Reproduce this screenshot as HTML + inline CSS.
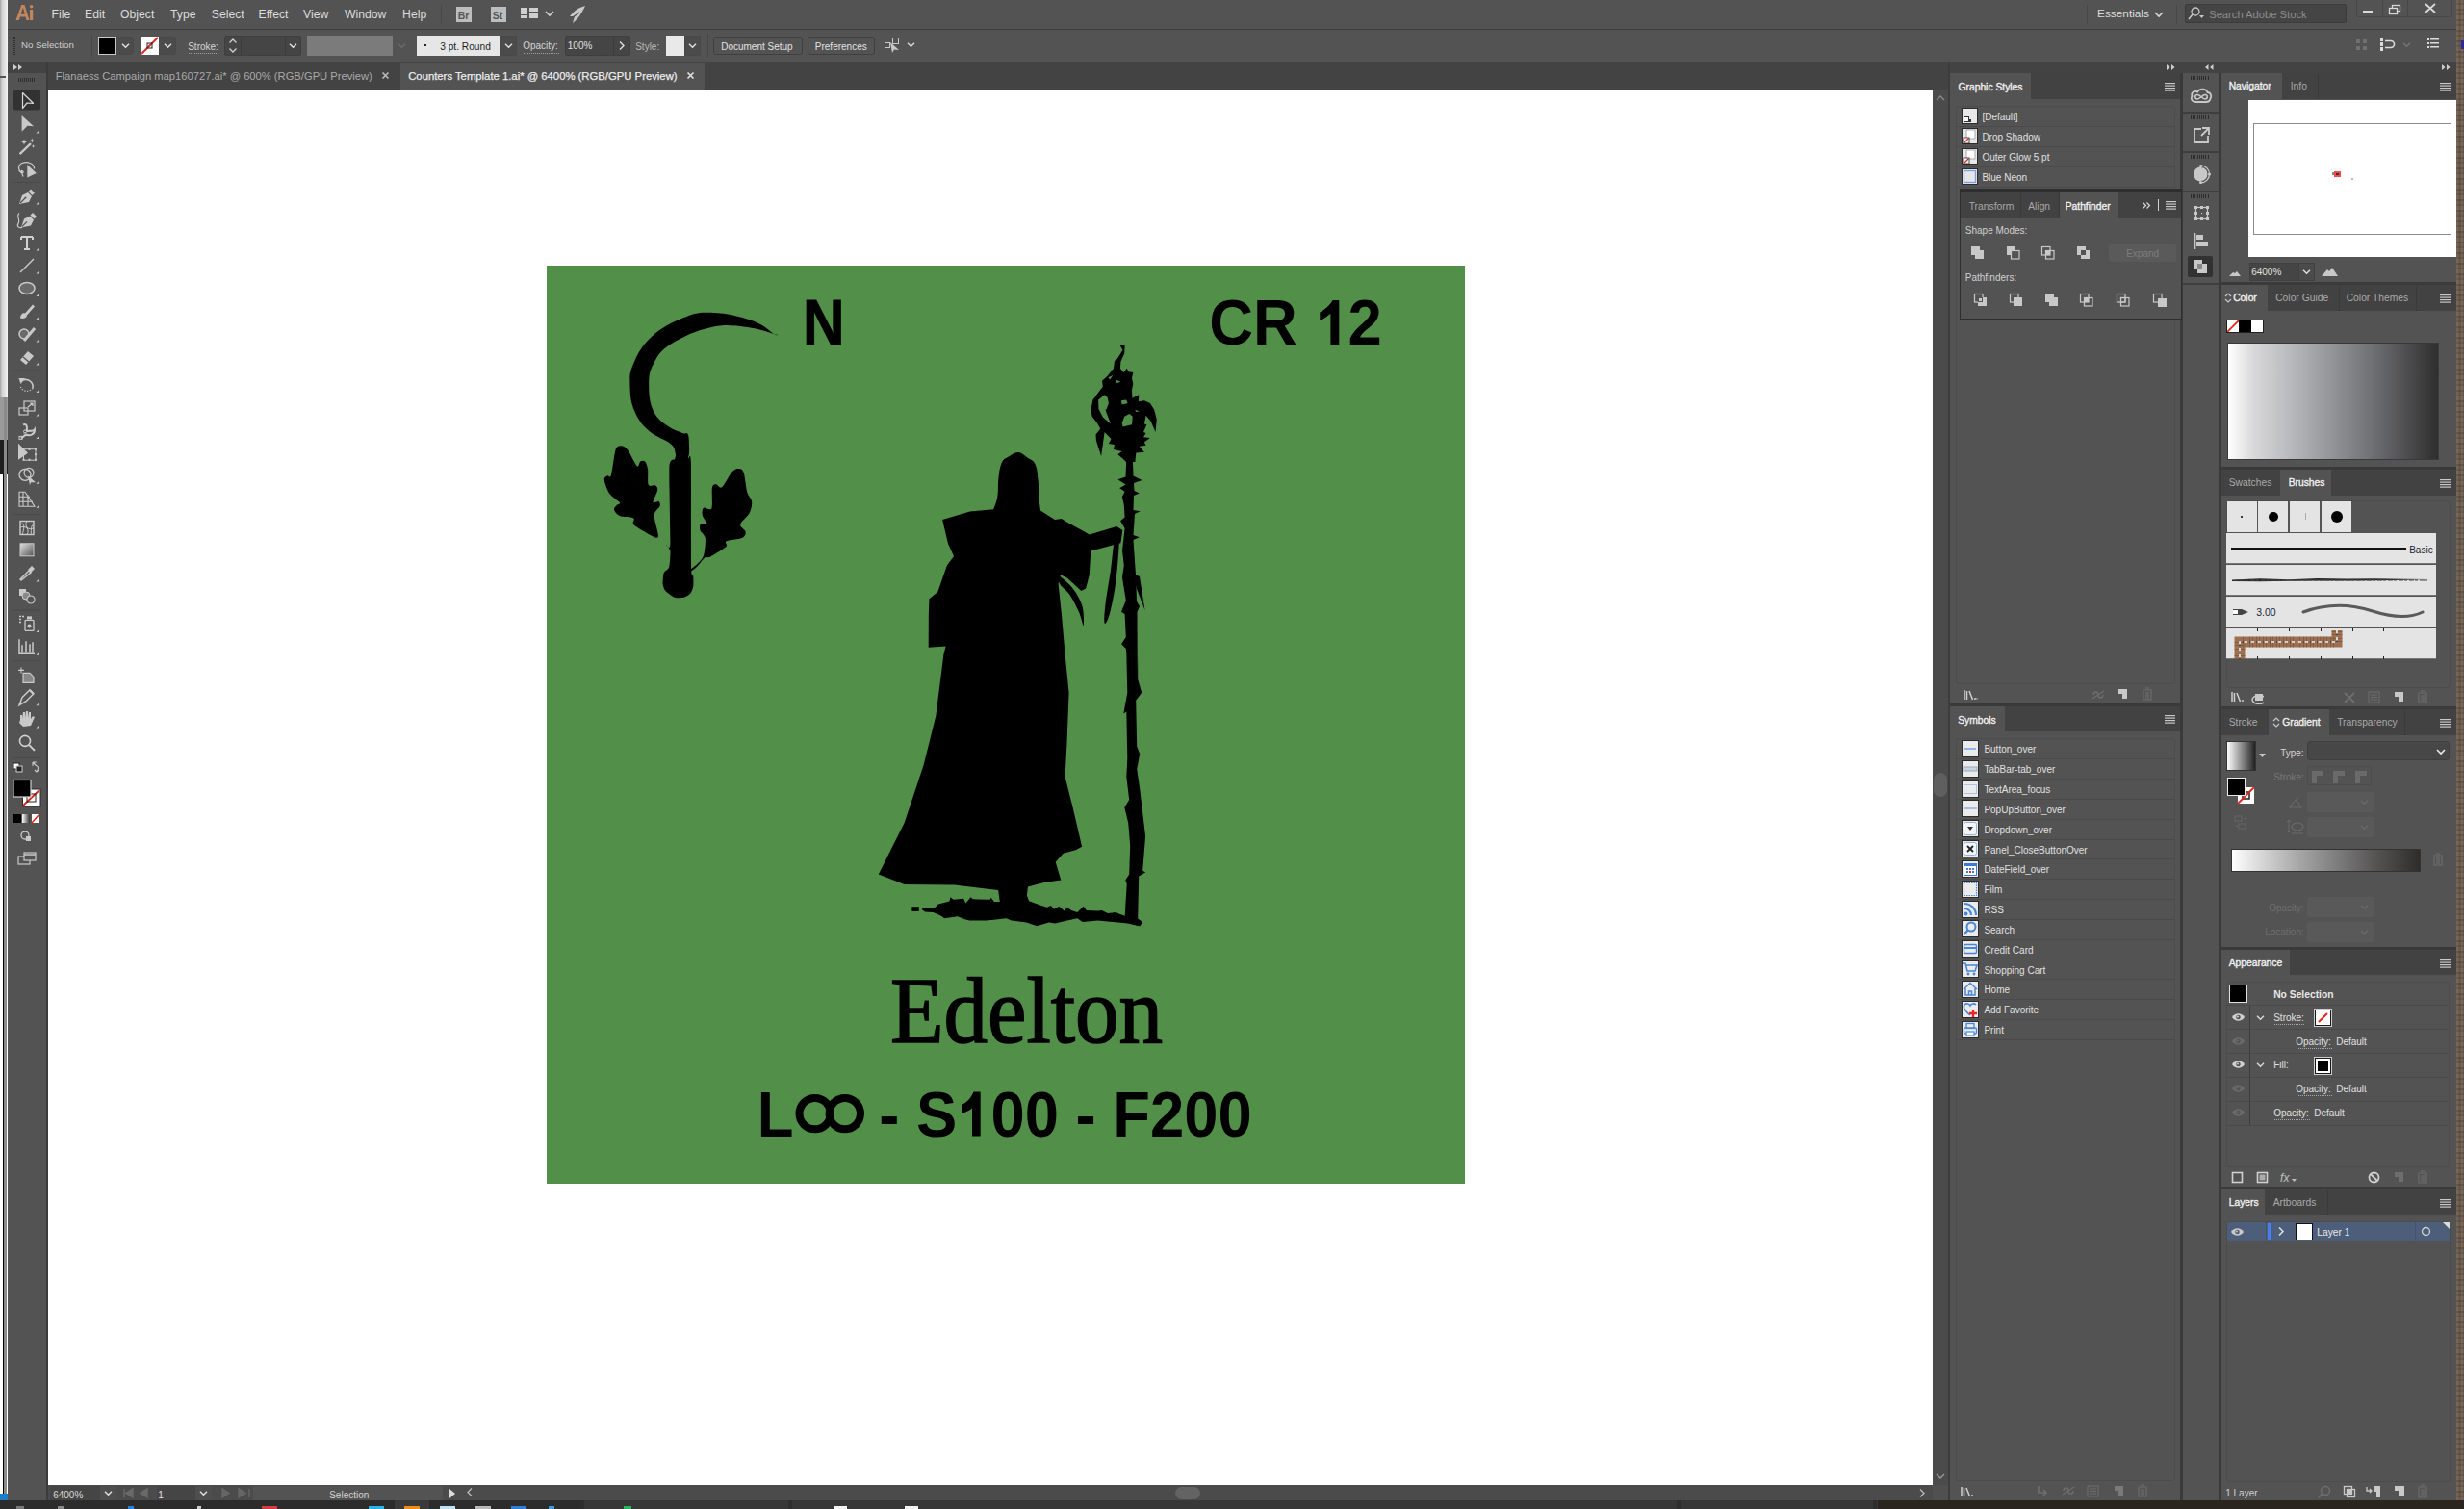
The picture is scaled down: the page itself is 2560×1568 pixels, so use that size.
<!DOCTYPE html>
<html><head><meta charset="utf-8">
<style>
html,body{margin:0;padding:0}
body{width:2560px;height:1568px;overflow:hidden;position:relative;background:#535353;font-family:"Liberation Sans",sans-serif;color:#d4d4d4;font-size:11px}
.a{position:absolute}
.dk{background:#434343}
.pn{background:#535353}
.t{position:absolute;white-space:nowrap;line-height:1}
.ham{position:absolute;width:12px;height:9px;background:repeating-linear-gradient(#cfcfcf 0 1px,transparent 1px 2px)}
.grip{position:absolute;width:22px;height:4px;background:repeating-linear-gradient(90deg,#2e2e2e 0 1px,transparent 1px 2px)}
.row{position:absolute;left:0;right:0;border-bottom:1px solid #4a4a4a}
.dd{position:absolute;width:10px;height:10px}
.ico{position:absolute;width:18px;height:18px;background:#e8e8e8;border:1px solid #2b2b2b;box-sizing:border-box}
</style></head>
<body>
<!-- desktop strips -->
<div class="a" style="left:0;top:0;width:8px;height:413px;background:linear-gradient(90deg,#a0a0a0 0,#d0d0d0 2px,#e2e2e2 5px,#f4f4f4 8px)"></div><div class="a" style="left:0;top:79px;width:6px;height:2px;background:#555"></div>
<div class="a" style="left:0;top:413px;width:8px;height:44px;background:#9a9a9a"></div>
<div class="a" style="left:0;top:457px;width:8px;height:36px;background:#1e1e1e"></div>
<div class="a" style="left:0;top:493px;width:8px;height:1059px;background:#ffffff"></div>
<div class="a" style="left:3px;top:493px;width:1px;height:1059px;background:#000"></div>
<div class="a" style="left:4px;top:413px;width:3px;height:1139px;background:#8a8a8a"></div><div class="a" style="left:8px;top:0;width:1px;height:1559px;background:#3a3a3a"></div>
<div class="a" style="left:0;top:1552px;width:8px;height:8px;background:#1a7dc8"></div>
<div class="a" style="left:2552px;top:0;width:8px;height:1559px;background:repeating-linear-gradient(#6d5d4f 0 3px,#62544a 3px 5px,#73604f 5px 9px,#5e5045 9px 11px)"></div><div class="a" style="left:2552px;top:0;width:8px;height:1559px;background:repeating-linear-gradient(90deg,rgba(255,255,255,0.04) 0 2px,rgba(0,0,0,0.06) 2px 5px)"></div><div class="a" style="left:2557px;top:42px;width:3px;height:9px;background:#2a2a9a"></div>

<!-- menu bar -->
<div class="a pn" style="left:8px;top:0;width:2544px;height:30px"></div>
<div class="a" style="left:8px;top:30px;width:2544px;height:1px;background:#3d3d3d"></div>
<!-- control bar -->
<div class="a pn" style="left:8px;top:31px;width:2544px;height:33px"></div>

<!-- toolbar -->
<div class="a" style="left:8px;top:64px;width:40px;height:12px;background:#434343"></div>
<div class="a pn" style="left:8px;top:76px;width:40px;height:1483px"></div>
<div class="a" style="left:48px;top:64px;width:2px;height:1495px;background:#3c3c3c"></div>

<!-- doc tabs -->
<div class="a dk" style="left:50px;top:64px;width:1974px;height:29px"></div>
<div class="a pn" style="left:416px;top:65px;width:316px;height:28px"></div>

<!-- canvas -->
<div class="a" style="left:50px;top:93px;width:1958px;height:1450px;background:#fff"></div><div class="a" style="left:50px;top:92.5px;width:1958px;height:1px;background:#9a9a9a"></div>
<div class="a" style="left:2008px;top:93px;width:16px;height:1450px;background:#4b4b4b"></div>
<div class="a" style="left:2024px;top:64px;width:2px;height:1495px;background:#3d3d3d"></div>

<!-- status bar -->
<div class="a" style="left:50px;top:1543px;width:1974px;height:16px;background:#4b4b4b"></div>
<!-- taskbar -->


<!-- dock col1 -->
<div class="a dk" style="left:2026px;top:64px;width:239px;height:12px"></div>
<div class="a pn" style="left:2026px;top:76px;width:239px;height:1483px"></div>
<div class="a" style="left:2026px;top:64px;width:526px;height:12px;background:#434343"></div><div class="a" style="left:2265px;top:76px;width:3px;height:1483px;background:#3a3a3a"></div>
<!-- icon strip -->
<div class="a dk" style="left:2268px;top:64px;width:37px;height:12px"></div>
<div class="a pn" style="left:2268px;top:76px;width:37px;height:1483px"></div>
<div class="a" style="left:2305px;top:76px;width:3px;height:1483px;background:#3a3a3a"></div>
<!-- dock col2 -->
<div class="a dk" style="left:2308px;top:64px;width:244px;height:12px"></div>
<div class="a pn" style="left:2308px;top:76px;width:244px;height:1483px"></div>

<svg class="a" style="left:14px;top:3px" width="24" height="20"><path d="M2.5,18 L8.3,2 L11.5,2 L16.5,18 L13.5,18 L12.5,14.5 L6.9,14.5 L5.8,18Z M7.7,11.8 L11.8,11.8 L9.8,4.8Z" fill="#c0875c" fill-rule="evenodd"/><rect x="17" y="7" width="3.2" height="11" fill="#c0875c"/><circle cx="18.6" cy="3.8" r="1.8" fill="#c0875c"/></svg>
<div class="t" style="left:53.6px;top:8.9px;font-size:12.2px;color:#dcdcdc;font-weight:normal;">File</div>
<div class="t" style="left:88.1px;top:8.9px;font-size:12.2px;color:#dcdcdc;font-weight:normal;">Edit</div>
<div class="t" style="left:125.1px;top:8.9px;font-size:12.2px;color:#dcdcdc;font-weight:normal;">Object</div>
<div class="t" style="left:177.1px;top:8.9px;font-size:12.2px;color:#dcdcdc;font-weight:normal;">Type</div>
<div class="t" style="left:219.8px;top:8.9px;font-size:12.2px;color:#dcdcdc;font-weight:normal;">Select</div>
<div class="t" style="left:268.5px;top:8.9px;font-size:12.2px;color:#dcdcdc;font-weight:normal;">Effect</div>
<div class="t" style="left:315.1px;top:8.9px;font-size:12.2px;color:#dcdcdc;font-weight:normal;">View</div>
<div class="t" style="left:358.0px;top:8.9px;font-size:12.2px;color:#dcdcdc;font-weight:normal;">Window</div>
<div class="t" style="left:418.1px;top:8.9px;font-size:12.2px;color:#dcdcdc;font-weight:normal;">Help</div>
<div class="a" style="left:458px;top:5px;width:1px;height:19px;background:#474747;"></div>
<div class="a" style="left:474px;top:7px;width:16px;height:16px;background:#bdbdbd;"></div>
<div class="t" style="left:475.7px;top:10.6px;font-size:10.5px;color:#555;font-weight:bold;">Br</div>
<div class="a" style="left:510px;top:7px;width:16px;height:16px;background:#bdbdbd;"></div>
<div class="t" style="left:511.7px;top:10.6px;font-size:10.5px;color:#555;font-weight:bold;">St</div>
<div class="a" style="left:541px;top:8px;width:7px;height:7px;background:#cfcfcf;"></div><div class="a" style="left:550px;top:8px;width:9px;height:4px;background:#cfcfcf;"></div><div class="a" style="left:550px;top:14px;width:9px;height:5px;background:#cfcfcf;"></div><div class="a" style="left:541px;top:16px;width:7px;height:3px;background:#cfcfcf;"></div>
<svg class="a" style="left:566px;top:10px" width="10" height="8"><path d="M1,2.0 L5,6.0 L9,2.0" fill="none" stroke="#cfcfcf" stroke-width="1.6"/></svg>
<svg class="a" style="left:590px;top:5px" width="20" height="20"><path d="M18,1 C10,3 5,8 2,12 L7,12 L5,19 C10,15 14,10 18,1Z" fill="#c8c8c8"/><path d="M5,13 L12,8" stroke="#535353" stroke-width="1.5"/></svg>
<div class="a" style="left:2168px;top:5px;width:1px;height:20px;background:#474747;"></div>
<div class="t" style="left:2179.1px;top:9.0px;font-size:11.8px;color:#dcdcdc;font-weight:normal;">Essentials</div>
<svg class="a" style="left:2238px;top:11px" width="10" height="8"><path d="M1,2.0 L5,6.0 L9,2.0" fill="none" stroke="#d8d8d8" stroke-width="1.6"/></svg>
<div class="a" style="left:2261px;top:5px;width:1px;height:20px;background:#474747;"></div>
<div class="a" style="left:2270px;top:4px;width:168px;height:20px;background:#454545;border:1px solid #3c3c3c;box-sizing:border-box;border-radius:2px"></div>
<svg class="a" style="left:2273px;top:7px" width="18" height="14"><circle cx="8" cy="5" r="4" fill="none" stroke="#c8c8c8" stroke-width="1.3"/><path d="M5,8 L1,13" stroke="#c8c8c8" stroke-width="1.5"/><path d="M12,9 L17,9 L14.5,12Z" fill="#c8c8c8"/></svg>
<div class="t" style="left:2295.2px;top:9.5px;font-size:11.2px;color:#8d8d8d;font-weight:normal;">Search Adobe Stock</div>
<div class="a" style="left:2448px;top:0px;width:100px;height:18px;background:transparent;border:1px solid #474747;border-top:none;box-sizing:border-box;border-radius:0 0 3px 3px"></div>
<div class="a" style="left:2475px;top:0px;width:1px;height:18px;background:#474747;"></div><div class="a" style="left:2501px;top:0px;width:1px;height:18px;background:#474747;"></div>
<div class="a" style="left:2455px;top:11px;width:10px;height:2px;background:#d8d8d8;"></div>
<svg class="a" style="left:2481px;top:4px" width="14" height="12"><rect x="4.5" y="1.5" width="8" height="6" fill="none" stroke="#d8d8d8" stroke-width="1.3"/><rect x="1.5" y="4.5" width="8" height="6" fill="#535353" stroke="#d8d8d8" stroke-width="1.3"/></svg>
<svg class="a" style="left:2518px;top:3px" width="14" height="12"><path d="M2,1 L12,10 M12,1 L2,10" stroke="#d8d8d8" stroke-width="1.8"/></svg>
<div class="a" style="left:13px;top:38px;width:3px;height:19px;background:repeating-linear-gradient(#2f2f2f 0 1px,transparent 1px 2px)"></div>
<div class="t" style="left:21.9px;top:42.4px;font-size:9.7px;color:#cfcfcf;font-weight:normal;">No Selection</div>
<div class="a" style="left:95px;top:36px;width:1px;height:23px;background:#474747;"></div>
<div class="a" style="left:102px;top:38px;width:19px;height:19px;background:#000;border:1px solid #c8c8c8;box-sizing:border-box"></div>
<div class="a" style="left:121px;top:38px;width:18px;height:19px;background:#4b4b4b;border:1px solid #484848;box-sizing:border-box;border-radius:0 3px 3px 0"></div>
<svg class="a" style="left:125.5px;top:43.5px" width="9.0" height="7.0"><path d="M1,1.75 L4.5,5.25 L8.0,1.75" fill="none" stroke="#e0e0e0" stroke-width="1.5"/></svg>
<div class="a" style="left:146px;top:38px;width:19px;height:19px;background:#fff;"></div>
<svg class="a" style="left:146px;top:38px" width="19" height="19"><path d="M1,18 L18,1" stroke="#e2231a" stroke-width="1.8"/><rect x="7" y="7" width="5" height="5" fill="none" stroke="#222" stroke-width="1"/></svg>
<div class="a" style="left:165px;top:38px;width:18px;height:19px;background:#4b4b4b;border:1px solid #484848;box-sizing:border-box;border-radius:0 3px 3px 0"></div>
<svg class="a" style="left:169.5px;top:43.5px" width="9.0" height="7.0"><path d="M1,1.75 L4.5,5.25 L8.0,1.75" fill="none" stroke="#e0e0e0" stroke-width="1.5"/></svg>
<div class="t" style="left:195.2px;top:43.5px;font-size:10px;color:#d6d6d6;font-weight:normal;">Stroke:</div>
<div class="a" style="left:196px;top:55px;width:31px;height:1px;background:repeating-linear-gradient(90deg,#a0a0a0 0 1px,transparent 1px 2px)"></div>
<div class="a" style="left:233px;top:37px;width:80px;height:21px;background:#454545;border:1px solid #3f3f3f;box-sizing:border-box;border-radius:2px"></div>
<div class="a" style="left:250px;top:38px;width:1px;height:19px;background:#3c3c3c;"></div><div class="a" style="left:296px;top:38px;width:1px;height:19px;background:#3c3c3c;"></div>
<svg class="a" style="left:237px;top:39px" width="10" height="17"><path d="M1.5,5.5 L5,2 L8.5,5.5 M1.5,11.5 L5,15 L8.5,11.5" fill="none" stroke="#d0d0d0" stroke-width="1.3"/></svg>
<svg class="a" style="left:300.0px;top:43.5px" width="9.0" height="7.0"><path d="M1,1.75 L4.5,5.25 L8.0,1.75" fill="none" stroke="#e0e0e0" stroke-width="1.5"/></svg>
<div class="a" style="left:319px;top:37px;width:89px;height:21px;background:#7b7b7b;"></div>
<svg class="a" style="left:412.5px;top:43.5px" width="9.0" height="7.0"><path d="M1,1.75 L4.5,5.25 L8.0,1.75" fill="none" stroke="#6a6a6a" stroke-width="1.5"/></svg>
<div class="a" style="left:433px;top:37px;width:86px;height:21px;background:#e6e6e6;"></div>
<div class="a" style="left:441px;top:46px;width:2px;height:2px;background:#222;"></div>
<div class="t" style="left:457.2px;top:43.9px;font-size:10.2px;color:#1e1e1e;font-weight:normal;">3 pt. Round</div>
<div class="a" style="left:519px;top:37px;width:18px;height:21px;background:#4b4b4b;border:1px solid #484848;box-sizing:border-box"></div>
<svg class="a" style="left:523.5px;top:43.5px" width="9.0" height="7.0"><path d="M1,1.75 L4.5,5.25 L8.0,1.75" fill="none" stroke="#e0e0e0" stroke-width="1.5"/></svg>
<div class="t" style="left:543.2px;top:43.0px;font-size:10px;color:#d6d6d6;font-weight:normal;">Opacity:</div>
<div class="a" style="left:544px;top:54.5px;width:37px;height:1px;background:repeating-linear-gradient(90deg,#a0a0a0 0 1px,transparent 1px 2px)"></div>
<div class="a" style="left:587px;top:37px;width:68px;height:21px;background:#454545;border:1px solid #3f3f3f;box-sizing:border-box;border-radius:2px"></div>
<div class="a" style="left:637px;top:38px;width:1px;height:19px;background:#3c3c3c;"></div>
<div class="t" style="left:589.8px;top:43.0px;font-size:10px;color:#e0e0e0;font-weight:normal;">100%</div>
<svg class="a" style="left:642px;top:42px" width="8" height="11"><path d="M2,1.5 L6,5.5 L2,9.5" fill="none" stroke="#e0e0e0" stroke-width="1.4"/></svg>
<div class="t" style="left:660.2px;top:43.5px;font-size:10px;color:#b8b8b8;font-weight:normal;">Style:</div>
<div class="a" style="left:691.5px;top:37px;width:19px;height:21px;background:#e9e9e9;"></div>
<div class="a" style="left:711px;top:37px;width:17px;height:21px;background:#4b4b4b;border:1px solid #484848;box-sizing:border-box"></div>
<svg class="a" style="left:715.0px;top:43.5px" width="9.0" height="7.0"><path d="M1,1.75 L4.5,5.25 L8.0,1.75" fill="none" stroke="#e0e0e0" stroke-width="1.5"/></svg>
<div class="a" style="left:735px;top:35px;width:1px;height:24px;background:#474747;"></div>
<div class="a" style="left:741px;top:38px;width:93px;height:19px;background:transparent;border:1px solid #404040;box-sizing:border-box;border-radius:3px"></div>
<div class="t" style="left:749.2px;top:44.0px;font-size:10px;color:#e2e2e2;font-weight:normal;">Document Setup</div>
<div class="a" style="left:839px;top:38px;width:70px;height:19px;background:transparent;border:1px solid #404040;box-sizing:border-box;border-radius:3px"></div>
<div class="t" style="left:846.8px;top:44.0px;font-size:10px;color:#e2e2e2;font-weight:normal;">Preferences</div>
<svg class="a" style="left:918px;top:38px" width="20" height="18"><rect x="1.5" y="6.5" width="5" height="5" fill="none" stroke="#c8c8c8"/><rect x="9.5" y="1.5" width="6" height="6" fill="none" stroke="#c8c8c8"/><path d="M7,6 L16,14 L11,13.5 L9,17Z" fill="#c8c8c8"/></svg>
<svg class="a" style="left:941.5px;top:42.5px" width="9.0" height="7.0"><path d="M1,1.75 L4.5,5.25 L8.0,1.75" fill="none" stroke="#d8d8d8" stroke-width="1.4"/></svg>
<svg class="a" style="left:2447px;top:40px" width="14" height="14"><g fill="#707070"><rect x="1" y="1" width="4" height="4"/><rect x="8" y="1" width="4" height="4"/><rect x="1" y="8" width="4" height="4"/><rect x="8" y="8" width="4" height="4"/></g></svg>
<svg class="a" style="left:2473px;top:39px" width="18" height="16"><g fill="#dcdcdc"><rect x="0" y="0" width="3" height="4"/><rect x="0" y="5" width="3" height="4"/><rect x="0" y="10" width="3" height="4"/></g><path d="M5,3.5 L11,3.5 A3.5,3.5 0 0 1 11,10.5 L5,10.5" fill="none" stroke="#dcdcdc" stroke-width="1.6"/></svg>
<svg class="a" style="left:2495.5px;top:42.5px" width="9.0" height="7.0"><path d="M1,1.75 L4.5,5.25 L8.0,1.75" fill="none" stroke="#777" stroke-width="1.4"/></svg>
<svg class="a" style="left:2522px;top:40px" width="12" height="12"><g fill="#dcdcdc"><rect x="0" y="0" width="2" height="2"/><rect x="0" y="4" width="2" height="2"/><rect x="0" y="8" width="2" height="2"/><rect x="3" y="0" width="9" height="1.5"/><rect x="3" y="4" width="9" height="1.5"/><rect x="3" y="8" width="9" height="1.5"/></g></svg>
<div class="t" style="left:57.7px;top:74.0px;font-size:11.2px;color:#a9a9a9;font-weight:normal;">Flanaess Campaign map160727.ai* @ 600% (RGB/GPU Preview)</div>
<svg class="a" style="left:396px;top:74px" width="10" height="10"><path d="M1.5,1.5 L7.5,7.5 M7.5,1.5 L1.5,7.5" stroke="#b8b8b8" stroke-width="1.7"/></svg>
<div class="t" style="left:424.2px;top:73.9px;font-size:11.3px;color:#ececec;font-weight:normal;-webkit-text-stroke:0.25px #ececec">Counters Template 1.ai* @ 6400% (RGB/GPU Preview)</div>
<svg class="a" style="left:713px;top:74px" width="10" height="10"><path d="M1.5,1.5 L7.5,7.5 M7.5,1.5 L1.5,7.5" stroke="#e0e0e0" stroke-width="1.7"/></svg>
<svg class="a" style="left:2010px;top:98px" width="12" height="8"><path d="M2,6 L6,2 L10,6" fill="none" stroke="#8a8a8a" stroke-width="1.4"/></svg>
<svg class="a" style="left:2010px;top:1530px" width="12" height="8"><path d="M2,2 L6,6 L10,2" fill="none" stroke="#9a9a9a" stroke-width="1.4"/></svg>
<div class="a" style="left:52px;top:1544px;width:52px;height:15px;background:#454545;"></div>
<div class="t" style="left:55.2px;top:1549.0px;font-size:10px;color:#d8d8d8;font-weight:normal;">6400%</div>
<div class="a" style="left:104px;top:1544px;width:17px;height:15px;background:#4e4e4e;"></div>
<svg class="a" style="left:107.5px;top:1547.5px" width="9.0" height="7.0"><path d="M1,1.75 L4.5,5.25 L8.0,1.75" fill="none" stroke="#e0e0e0" stroke-width="1.5"/></svg>
<svg class="a" style="left:128px;top:1546px" width="36" height="12"><path d="M1,1 L1,10 M10,1 L3,5.5 L10,10Z M25,1 L18,5.5 L25,10Z" fill="#6a6a6a" stroke="#6a6a6a" stroke-width="1.5"/></svg>
<div class="a" style="left:163px;top:1544px;width:40px;height:15px;background:#454545;"></div>
<div class="t" style="left:164.2px;top:1549.0px;font-size:10px;color:#e0e0e0;font-weight:normal;">1</div>
<div class="a" style="left:203px;top:1544px;width:17px;height:15px;background:#4e4e4e;"></div>
<svg class="a" style="left:206.5px;top:1547.5px" width="9.0" height="7.0"><path d="M1,1.75 L4.5,5.25 L8.0,1.75" fill="none" stroke="#e0e0e0" stroke-width="1.5"/></svg>
<svg class="a" style="left:228px;top:1546px" width="36" height="12"><path d="M3,1 L10,5.5 L3,10Z M20,1 L27,5.5 L20,10Z M31,1 L31,10" fill="#666" stroke="#666" stroke-width="1.5"/></svg>
<div class="a" style="left:263px;top:1544px;width:197px;height:15px;background:#535353;"></div>
<div class="t" style="left:342.2px;top:1549.0px;font-size:10px;color:#d2d2d2;font-weight:normal;">Selection</div>
<svg class="a" style="left:465px;top:1546px" width="10" height="12"><path d="M2,1 L8,6 L2,11Z" fill="#dcdcdc"/></svg>
<svg class="a" style="left:484px;top:1545px" width="8" height="12"><path d="M6,1.5 L2,5.5 L6,9.5" fill="none" stroke="#bbb" stroke-width="1.3"/></svg>
<div class="a" style="left:1221px;top:1545px;width:26px;height:13px;background:#636363;border-radius:7px"></div>
<div class="a" style="left:2009px;top:803px;width:14px;height:25px;background:#5f5f5f;border-radius:7px"></div>
<svg class="a" style="left:1993px;top:1546px" width="8" height="12"><path d="M2,1.5 L6,5.5 L2,9.5" fill="none" stroke="#bbb" stroke-width="1.3"/></svg>
<div class="a" style="left:0px;top:1559px;width:603px;height:9px;background:#2c2c2c;"></div>
<div class="a" style="left:603px;top:1559px;width:1348px;height:9px;background:#373737;"></div>
<div class="a" style="left:1951px;top:1559px;width:609px;height:9px;background:#2b2520;"></div>
<div class="a" style="left:603px;top:1559px;width:4px;height:9px;background:#2e2e2e;"></div>
<div class="a" style="left:819px;top:1559px;width:4px;height:9px;background:#2e2e2e;"></div>
<div class="a" style="left:1742px;top:1559px;width:4px;height:9px;background:#2e2e2e;"></div>
<div class="a" style="left:1946px;top:1559px;width:4px;height:9px;background:#2e2e2e;"></div>
<div class="a" style="left:410px;top:1559px;width:36px;height:9px;background:#3a3a3a;"></div>
<div class="a" style="left:17px;top:1565px;width:8px;height:3px;background:#777;"></div>
<div class="a" style="left:60px;top:1565px;width:6px;height:3px;background:#888;"></div>
<div class="a" style="left:133px;top:1565px;width:6px;height:3px;background:#2d7fd6;"></div>
<div class="a" style="left:205px;top:1565px;width:4px;height:3px;background:#ccc;"></div>
<div class="a" style="left:272px;top:1565px;width:16px;height:3px;background:#d83b3b;"></div>
<div class="a" style="left:383px;top:1565px;width:16px;height:3px;background:#2ab3e8;"></div>
<div class="a" style="left:420px;top:1565px;width:16px;height:3px;background:#f08a1c;"></div>
<div class="a" style="left:457px;top:1565px;width:16px;height:3px;background:#bfe3f5;"></div>
<div class="a" style="left:494px;top:1565px;width:16px;height:3px;background:#b8b8b8;"></div>
<div class="a" style="left:531px;top:1565px;width:16px;height:3px;background:#2d7fd6;"></div>
<div class="a" style="left:570px;top:1565px;width:6px;height:3px;background:#3a9ae0;"></div>
<div class="a" style="left:648px;top:1565px;width:8px;height:3px;background:#2fb35a;"></div>
<div class="a" style="left:866px;top:1565px;width:14px;height:3px;background:#f2f2f2;"></div>
<div class="a" style="left:940px;top:1565px;width:14px;height:3px;background:#f2f2f2;"></div>
<div class="a" style="left:2008px;top:1543px;width:16px;height:16px;background:#505050;"></div>
<svg class="a" style="left:0;top:0" width="50" height="1560" viewBox="0 0 50 1560">
<path d="M14,67 L18,70 L14,73Z M19,67 L23,70 L19,73Z" fill="#cfcfcf"/>
<g fill="#2f2f2f"><rect x="19" y="81" width="1" height="4"/><rect x="21" y="81" width="1" height="4"/><rect x="23" y="81" width="1" height="4"/><rect x="25" y="81" width="1" height="4"/><rect x="27" y="81" width="1" height="4"/><rect x="29" y="81" width="1" height="4"/><rect x="31" y="81" width="1" height="4"/><rect x="33" y="81" width="1" height="4"/><rect x="35" y="81" width="1" height="4"/></g>
<rect x="14" y="93.5" width="28" height="21" rx="2" fill="#323232"/>
<rect x="13" y="189" width="30" height="1" fill="#4a4a4a"/>
<rect x="13" y="384.5" width="30" height="1" fill="#4a4a4a"/>
<rect x="13" y="534" width="30" height="1" fill="#4a4a4a"/>
<rect x="13" y="633.5" width="30" height="1" fill="#4a4a4a"/>
<rect x="13" y="686" width="30" height="1" fill="#4a4a4a"/>
<rect x="13" y="787" width="30" height="1" fill="#4a4a4a"/>
<rect x="14" y="793" width="6" height="6" fill="#fff" stroke="#222"/><rect x="17" y="796" width="6" height="6" fill="#222" stroke="#ccc"/>
<path d="M34,792 L38,796 M34,792 L34,796 M34,792 L38,792 M38,796 C40,796 40,800 38,802 M38,802 L36,800 M38,802 L40,800" fill="none" stroke="#c9c9c9" stroke-width="1.1"/>
<rect x="23.5" y="820" width="18.5" height="18" fill="#fff" stroke="#2a2a2a"/><path d="M24,837 L41,821" stroke="#e2231a" stroke-width="1.8"/><rect x="28" y="825" width="9" height="8" fill="none" stroke="#222" stroke-width="1"/>
<rect x="14" y="810.5" width="18" height="17.5" fill="#000" stroke="#d0d0d0" stroke-width="1.2"/>
<rect x="14" y="846" width="8" height="9" fill="#000"/><defs><linearGradient id="tg2"><stop offset="0" stop-color="#fff"/><stop offset="1" stop-color="#333"/></linearGradient></defs><rect x="23" y="846" width="8" height="9" fill="url(#tg2)"/><rect x="33" y="846" width="8" height="9" fill="#fff"/><path d="M33,855 L41,846" stroke="#e2231a" stroke-width="1.5"/>
<g transform="translate(28,104)"><path d="M-4.5,-7.5 L6.5,3.3 L0,3 L-4.5,8.6Z" fill="none" stroke="#d8d8d8" stroke-width="1.2" stroke-linejoin="round"/></g>
<g transform="translate(28,130)"><path d="M-5.4,-10 L7,1.2 L0.5,0.8 L-5.4,6.7Z" fill="#c9c9c9"/><path d="M9.5,8.5 L13,5 L13,8.5Z" fill="#c9c9c9"/></g>
<g transform="translate(28,152.6)"><path d="M-7.5,7.5 L4,-3.5" stroke="#c9c9c9" stroke-width="2.2"/><path d="M-3,-8 L-2.2,-5.8 L0,-5 L-2.2,-4.2 L-3,-2 L-3.8,-4.2 L-6,-5 L-3.8,-5.8Z M5.3,-9 L6,-7.2 L7.8,-6.5 L6,-5.8 L5.3,-4 L4.6,-5.8 L2.8,-6.5 L4.6,-7.2Z M6.5,-2.5 L7,-1.2 L8.3,-0.7 L7,-0.2 L6.5,1.1 L6,-0.2 L4.7,-0.7 L6,-1.2Z" fill="#c9c9c9"/></g>
<g transform="translate(28,176.5)"><path d="M7.5,-1 C8,-7 0,-9 -5,-7 C-10,-5 -9,1 -6,3 C-4,4 -3,2 -5,1 C-7,0 -5,4 -4,7" fill="none" stroke="#c9c9c9" stroke-width="1.3"/><path d="M0.3,-5.5 L9.8,3.6 L0.3,8.1Z" fill="#c9c9c9"/></g>
<g transform="translate(28,204)"><path d="M-8,8 L-5,-1 L1,-4 L5,0 L2,6Z" fill="#c9c9c9"/><path d="M1.5,-5 L4,-7.5 L8,-3.5 L5.5,-1Z" fill="#c9c9c9"/><path d="M-7,7 L-2,2" stroke="#535353" stroke-width="1.2"/><circle cx="-1.5" cy="1.5" r="1" fill="#535353"/><path d="M9.5,8.5 L13,5 L13,8.5Z" fill="#c9c9c9"/></g>
<g transform="translate(28,228.4)"><path d="M-6,8 L-3,-1 L3,-4 L7,0 L4,6Z" fill="#c9c9c9"/><path d="M3.5,-5 L6,-7.5 L10,-3.5 L7.5,-1Z" fill="#c9c9c9"/><path d="M-5,7 L0,2" stroke="#535353" stroke-width="1.2"/><path d="M-8,-7 C-12,-3 -6,0 -9,4 C-11,7 -8,9 -5,8" fill="none" stroke="#c9c9c9" stroke-width="1.2"/></g>
<g transform="translate(28,252)"><path d="M-6,-6 L6,-6 M0,-6 L0,7 M-3,7 L3,7 M-6,-6 L-6,-3 M6,-6 L6,-3" stroke="#d0d0d0" stroke-width="2"/><path d="M9.5,8.5 L13,5 L13,8.5Z" fill="#c9c9c9"/></g>
<g transform="translate(28,276)"><path d="M-7,7 L7,-7" stroke="#c9c9c9" stroke-width="1.5"/><path d="M9.5,8.5 L13,5 L13,8.5Z" fill="#c9c9c9"/></g>
<g transform="translate(28,299.4)"><ellipse cx="0" cy="0" rx="8" ry="6" fill="#6a6a6a" stroke="#c9c9c9" stroke-width="1.5"/><path d="M9.5,8.5 L13,5 L13,8.5Z" fill="#c9c9c9"/></g>
<g transform="translate(28,323.6)"><path d="M-7,7 C-7,3 -4,1 -2,2 L6,-7 L8,-5 L0,4 C0,7 -4,8 -7,7Z" fill="#c9c9c9"/><path d="M9.5,8.5 L13,5 L13,8.5Z" fill="#c9c9c9"/></g>
<g transform="translate(28,347)"><circle cx="-3" cy="0" r="5" fill="#6a6a6a" stroke="#c9c9c9" stroke-width="1.5"/><path d="M-3,7 L8,-6" stroke="#c9c9c9" stroke-width="3"/><path d="M9.5,8.5 L13,5 L13,8.5Z" fill="#c9c9c9"/></g>
<g transform="translate(28,371)"><path d="M-7,3 L1,-6 L7,-1 L-1,8Z" fill="#c9c9c9"/><path d="M-4,0 L3,6" stroke="#535353" stroke-width="1.3"/><path d="M9.5,8.5 L13,5 L13,8.5Z" fill="#c9c9c9"/></g>
<g transform="translate(28,399.4)"><path d="M-5,-4 A7.5,7.5 0 0 1 6,4" fill="none" stroke="#c9c9c9" stroke-width="1.6"/><path d="M6,4 A7.5,7.5 0 0 1 -7,2" fill="none" stroke="#c9c9c9" stroke-width="1.2" stroke-dasharray="1.2 1.6"/><path d="M-8.5,-6.5 L-2,-6.5 L-6.5,-0.5Z" fill="#c9c9c9"/><path d="M9.5,8.5 L13,5 L13,8.5Z" fill="#c9c9c9"/></g>
<g transform="translate(28,424)"><rect x="-8" y="0" width="9" height="7" fill="none" stroke="#c9c9c9" stroke-width="1.2"/><rect x="-3" y="-7" width="11" height="10" fill="none" stroke="#c9c9c9" stroke-width="1.2"/><path d="M1,-1 L6,-5 M3,-5 L6,-5 L6,-2" stroke="#c9c9c9" stroke-width="1.2" fill="none"/><path d="M9.5,8.5 L13,5 L13,8.5Z" fill="#c9c9c9"/></g>
<g transform="translate(28,447.4)"><path d="M-4,-6 C0,-8 1,-2 -1,1 C3,-1 6,2 8,-1 C8,4 3,6 -1,4 L-6,8" fill="none" stroke="#c9c9c9" stroke-width="2"/><circle cx="-2" cy="1" r="1.5" fill="#535353" stroke="#c9c9c9"/><rect x="-8" y="6" width="3" height="3" fill="none" stroke="#c9c9c9"/><path d="M9.5,8.5 L13,5 L13,8.5Z" fill="#c9c9c9"/></g>
<g transform="translate(28,470.7)"><rect x="-3.5" y="-4" width="12.5" height="11.5" fill="none" stroke="#c9c9c9" stroke-width="1"/><g fill="#c9c9c9"><rect x="-4.5" y="6" width="2" height="2"/><rect x="1.5" y="6" width="2" height="2"/><rect x="8" y="6" width="2" height="2"/><rect x="8" y="0.5" width="2" height="2"/><rect x="8" y="-5" width="2" height="2"/><rect x="1.5" y="-5" width="2" height="2"/></g><path d="M-9,-10 L1,0 L-9,7Z" fill="#c9c9c9"/></g>
<g transform="translate(28,494.3)"><circle cx="-2" cy="-1" r="6" fill="none" stroke="#c9c9c9" stroke-width="1.3"/><circle cx="2" cy="-3" r="5" fill="none" stroke="#c9c9c9" stroke-width="1.2"/><path d="M1,0 L9,7 L4,7 L3,10Z" fill="#c9c9c9"/><path d="M9.5,8.5 L13,5 L13,8.5Z" fill="#c9c9c9"/></g>
<g transform="translate(28,519.3)"><path d="M-8,-8 L-8,7 L8,7 L-2,-8Z M-8,-3 L3,-3 M-8,2 L6,2 M-4,-8 L-4,7 M1,-5 L1,7" fill="none" stroke="#c9c9c9" stroke-width="1.1"/><path d="M9.5,8.5 L13,5 L13,8.5Z" fill="#c9c9c9"/></g>
<g transform="translate(28,548.5)"><rect x="-7" y="-7" width="14" height="14" fill="none" stroke="#c9c9c9" stroke-width="1.4"/><path d="M-7,0 C-2,-4 2,4 7,0 M0,-7 C-4,-2 4,2 0,7 M-7,-4 C-3,-6 -2,-1 -5,7 M7,-4 C3,-1 5,4 4,7" fill="none" stroke="#c9c9c9" stroke-width="1"/></g>
<g transform="translate(28,571.8)"><defs><linearGradient id="tg" x1="0" y1="0" x2="1" y2="1"><stop offset="0" stop-color="#e0e0e0"/><stop offset="1" stop-color="#555"/></linearGradient></defs><rect x="-7" y="-7" width="14" height="13" fill="url(#tg)" stroke="#c9c9c9"/></g>
<g transform="translate(28,596)"><path d="M-6,7 L-7,6 L2,-3 L4,-1 Z" fill="none" stroke="#c9c9c9" stroke-width="1.5"/><path d="M1,-4 L5,-8 L8,-5 L4,-1Z" fill="#c9c9c9"/><path d="M9.5,8.5 L13,5 L13,8.5Z" fill="#c9c9c9"/></g>
<g transform="translate(28,619)"><rect x="-8" y="-7" width="7" height="7" fill="#c9c9c9"/><circle cx="-1" cy="0" r="4" fill="#888" stroke="#c9c9c9"/><circle cx="4" cy="4" r="4" fill="#535353" stroke="#c9c9c9" stroke-width="1.2"/></g>
<g transform="translate(28,648.4)"><path d="M-8,-8 h2 M-5,-8 h2 M-8,-5 h2 M-8,-2 h2" stroke="#c9c9c9" stroke-width="1.5"/><rect x="-2" y="-4" width="9" height="11" rx="1" fill="none" stroke="#c9c9c9" stroke-width="1.3"/><circle cx="2.5" cy="2" r="2" fill="#c9c9c9"/><rect x="0" y="-8" width="5" height="3" fill="#c9c9c9"/><path d="M9.5,8.5 L13,5 L13,8.5Z" fill="#c9c9c9"/></g>
<g transform="translate(28,672.3)"><path d="M-8,-8 L-8,7 L8,7 M-5,6 L-5,-2 M-1,6 L-1,-6 M3,6 L3,-3 M6,6 L6,-5" fill="none" stroke="#c9c9c9" stroke-width="1.5"/><path d="M9.5,8.5 L13,5 L13,8.5Z" fill="#c9c9c9"/></g>
<g transform="translate(28,701.4)"><path d="M-6,-8 L-6,-2 M-9,-5 L-3,-5" stroke="#c9c9c9" stroke-width="1.1"/><path d="M-4,-2 L3,-2 L7,2 L7,8 L-4,8Z" fill="#888" stroke="#c9c9c9" stroke-width="1.2"/></g>
<g transform="translate(28,724.7)"><path d="M-8,8 L-5,0 L3,-8 L7,-4 L-1,4Z" fill="none" stroke="#c9c9c9" stroke-width="1.5"/><path d="M2,-7 L6,-3 L7,-5 L4,-8Z" fill="#c9c9c9"/><path d="M9.5,8.5 L13,5 L13,8.5Z" fill="#c9c9c9"/></g>
<g transform="translate(28,748)"><path d="M-7,0 L-7,-5 L-5,-5 L-5,-1 L-4,-8 L-2,-8 L-2,-2 L-1,-9 L1,-9 L1,-2 L2,-8 L4,-8 L4,-1 L6,-4 L8,-3 L4,6 L-4,7 L-8,3Z" fill="#c9c9c9"/><path d="M9.5,8.5 L13,5 L13,8.5Z" fill="#c9c9c9"/></g>
<g transform="translate(28,771.9)"><circle cx="-2" cy="-2" r="5.5" fill="none" stroke="#d0d0d0" stroke-width="1.6"/><path d="M2,2 L8,8" stroke="#d0d0d0" stroke-width="2"/></g>
<g transform="translate(28,869)"><circle cx="-2" cy="-1" r="4" fill="none" stroke="#c9c9c9" stroke-width="1.3"/><rect x="-1" y="0" width="5" height="5" fill="#c9c9c9"/></g>
<g transform="translate(28,893)"><rect x="-9" y="-3" width="12" height="8" fill="none" stroke="#c9c9c9" stroke-width="1.2"/><rect x="-3" y="-7" width="12" height="8" fill="#535353" stroke="#c9c9c9" stroke-width="1.2"/><path d="M-3,-5 h12" stroke="#c9c9c9" stroke-width="1.5"/></g>
</svg>
<svg class="a" style="left:2250px;top:66px" width="12" height="8"><path d="M1,1 L4.5,4 L1,7Z M6,1 L9.5,4 L6,7Z" fill="#cfcfcf"/></svg>
<svg class="a" style="left:2290px;top:66px" width="12" height="8"><path d="M4.5,1 L1,4 L4.5,7Z M9.5,1 L6,4 L9.5,7Z" fill="#cfcfcf"/></svg>
<svg class="a" style="left:2536px;top:66px" width="12" height="8"><path d="M1,1 L4.5,4 L1,7Z M6,1 L9.5,4 L6,7Z" fill="#cfcfcf"/></svg>
<div class="a" style="left:2110px;top:76px;width:155px;height:27px;background:#424242;"></div>
<div class="a" style="left:2026px;top:103px;width:239px;height:1px;background:#535353;"></div>
<div class="t" style="left:2034.5px;top:85.8px;font-size:10.3px;color:#f0f0f0;font-weight:normal;-webkit-text-stroke:0.35px #f0f0f0">Graphic Styles</div>
<svg class="a" style="left:2249px;top:86px" width="11" height="9"><g fill="#c8c8c8"><rect x="0" y="0" width="11" height="1.2"/><rect x="0" y="2.5" width="11" height="1.2"/><rect x="0" y="5" width="11" height="1.2"/><rect x="0" y="7.5" width="11" height="1.2"/></g></svg>
<div class="a" style="left:2032px;top:110px;width:228px;height:601px;background:transparent;border:1px solid #4c4c4c;box-sizing:border-box;border-radius:3px"></div>
<div class="a" style="left:2033px;top:131px;width:226px;height:1px;background:#4a4a4a;"></div>
<div class="a" style="left:2037.5px;top:112px;width:17px;height:17px;background:#e8e8e8;border:1px solid #2b2b2b;box-sizing:border-box"></div>
<div class="t" style="left:2059.4px;top:116.5px;font-size:10px;color:#e0e0e0;font-weight:normal;">[Default]</div>
<div class="a" style="left:2033px;top:152px;width:226px;height:1px;background:#4a4a4a;"></div>
<div class="a" style="left:2037.5px;top:133px;width:17px;height:17px;background:#e8e8e8;border:1px solid #2b2b2b;box-sizing:border-box"></div>
<div class="t" style="left:2059.4px;top:137.5px;font-size:10px;color:#e0e0e0;font-weight:normal;">Drop Shadow</div>
<div class="a" style="left:2033px;top:173px;width:226px;height:1px;background:#4a4a4a;"></div>
<div class="a" style="left:2037.5px;top:154px;width:17px;height:17px;background:#e8e8e8;border:1px solid #2b2b2b;box-sizing:border-box"></div>
<div class="t" style="left:2059.4px;top:158.5px;font-size:10px;color:#e0e0e0;font-weight:normal;">Outer Glow 5 pt</div>
<div class="a" style="left:2033px;top:194px;width:226px;height:1px;background:#4a4a4a;"></div>
<div class="a" style="left:2037.5px;top:175px;width:17px;height:17px;background:#e8e8e8;border:1px solid #2b2b2b;box-sizing:border-box"></div>
<div class="t" style="left:2059.4px;top:179.5px;font-size:10px;color:#e0e0e0;font-weight:normal;">Blue Neon</div>
<svg class="a" style="left:2038px;top:112px" width="17" height="17"><rect x="2.5" y="9.5" width="5" height="5" fill="#fff" stroke="#333"/><rect x="7" y="12" width="3" height="3" fill="#333"/></svg>
<svg class="a" style="left:2038px;top:133px" width="17" height="17"><rect x="5" y="2" width="9" height="9" fill="#fff" stroke="#999" stroke-width="0.8"/><rect x="2" y="10" width="6" height="6" fill="#fff" stroke="#222" stroke-width="0.8"/><path d="M2.5,15.5 L7.5,10.5" stroke="#e2231a" stroke-width="1.3"/></svg>
<svg class="a" style="left:2038px;top:154px" width="17" height="17"><rect x="5" y="2" width="9" height="9" fill="#fff" stroke="#999" stroke-width="0.8"/><rect x="2" y="10" width="6" height="6" fill="#fff" stroke="#222" stroke-width="0.8"/><path d="M2.5,15.5 L7.5,10.5" stroke="#e2231a" stroke-width="1.3"/></svg>
<svg class="a" style="left:2038px;top:175px" width="17" height="17"><rect x="2.5" y="2.5" width="12" height="12" fill="#e6e6e6" stroke="#7aa0e0" stroke-width="1.3"/></svg>
<svg class="a" style="left:2040px;top:716px" width="18" height="12"><path d="M1,1 L1,11 M3.5,2 L3.5,11 M6,2 L9.5,11 M11,10 L13,10" stroke="#d0d0d0" stroke-width="1.5"/><path d="M13,9.5 L15,9.5 L14,11Z" fill="#d0d0d0"/></svg>
<svg class="a" style="left:2172px;top:716px" width="16" height="12"><path d="M3,6 C3,2 8,2 8,6 M8,6 C8,10 13,10 13,6 M2,10 L14,2" fill="none" stroke="#6e6e6e" stroke-width="1.3"/></svg>
<svg class="a" style="left:2199px;top:715px" width="12" height="12"><path d="M2,1 L11,1 L11,11 L6,11 L6,6 L2,6Z" fill="#c8c8c8"/></svg>
<svg class="a" style="left:2225px;top:714px" width="12" height="14"><path d="M1,3 L11,3 M4,1 L8,1 M2,4 L2,13 L10,13 L10,4 M5,5 L5,12 M7,5 L7,12" fill="none" stroke="#6e6e6e" stroke-width="1.1"/></svg>
<div class="a" style="left:2036px;top:195.5px;width:231px;height:136.5px;background:#2e2e2e;"></div>
<div class="a" style="left:2037px;top:199px;width:229px;height:28px;background:#424242;"></div>
<div class="a" style="left:2037px;top:227px;width:229px;height:103.5px;background:#535353;"></div>
<div class="a" style="left:2099px;top:199px;width:1px;height:28px;background:#3a3a3a;"></div><div class="a" style="left:2138.7px;top:199px;width:1px;height:28px;background:#3a3a3a;"></div>
<div class="a" style="left:2139.5px;top:199px;width:61.5px;height:28px;background:#535353;"></div>
<div class="t" style="left:2045.7px;top:209.8px;font-size:10.3px;color:#a8a8a8;font-weight:normal;">Transform</div>
<div class="t" style="left:2107.2px;top:209.8px;font-size:10.3px;color:#a8a8a8;font-weight:normal;">Align</div>
<div class="t" style="left:2145.7px;top:209.8px;font-size:10.3px;color:#f0f0f0;font-weight:normal;-webkit-text-stroke:0.35px #f0f0f0">Pathfinder</div>
<svg class="a" style="left:2225px;top:209px" width="10" height="9"><path d="M1.5,1.5 L4.5,4.5 L1.5,7.5 M5.5,1.5 L8.5,4.5 L5.5,7.5" fill="none" stroke="#d8d8d8" stroke-width="1.2"/></svg>
<div class="a" style="left:2242px;top:207px;width:1px;height:12px;background:#cfcfcf;"></div>
<svg class="a" style="left:2250px;top:209px" width="11" height="9"><g fill="#c8c8c8"><rect x="0" y="0" width="11" height="1.2"/><rect x="0" y="2.5" width="11" height="1.2"/><rect x="0" y="5" width="11" height="1.2"/><rect x="0" y="7.5" width="11" height="1.2"/></g></svg>
<div class="t" style="left:2041.8px;top:235.0px;font-size:10px;color:#d0d0d0;font-weight:normal;">Shape Modes:</div>
<svg class="a" style="left:2047px;top:255px" width="16" height="16"><rect x="1" y="1" width="9" height="9" fill="#c8c8c8"/><rect x="5" y="5" width="9" height="9" fill="#c8c8c8"/></svg>
<svg class="a" style="left:2084px;top:255px" width="16" height="16"><rect x="1" y="1" width="9" height="9" fill="#c8c8c8"/><rect x="5.5" y="5.5" width="8.5" height="8.5" fill="#535353" stroke="#c8c8c8" stroke-width="1.2"/></svg>
<svg class="a" style="left:2120px;top:255px" width="16" height="16"><rect x="1.5" y="1.5" width="8.5" height="8.5" fill="none" stroke="#c8c8c8" stroke-width="1.2"/><rect x="5.5" y="5.5" width="8.5" height="8.5" fill="none" stroke="#c8c8c8" stroke-width="1.2"/><rect x="5.5" y="5.5" width="4.5" height="4.5" fill="#c8c8c8"/></svg>
<svg class="a" style="left:2157px;top:255px" width="16" height="16"><rect x="1" y="1" width="9" height="9" fill="#c8c8c8"/><rect x="5" y="5" width="9" height="9" fill="#c8c8c8"/><rect x="5" y="5" width="5" height="5" fill="#535353"/></svg>
<div class="a" style="left:2191px;top:254px;width:70px;height:18px;background:#5a5a5a;border-radius:2px"></div>
<div class="t" style="left:2209.2px;top:259.0px;font-size:10px;color:#7d7d7d;font-weight:normal;">Expand</div>
<div class="t" style="left:2041.8px;top:283.5px;font-size:10px;color:#d0d0d0;font-weight:normal;">Pathfinders:</div>
<svg class="a" style="left:2050px;top:304px" width="16" height="16"><rect x="1.5" y="1.5" width="8.5" height="8.5" fill="none" stroke="#c8c8c8" stroke-width="1.2"/><rect x="5" y="5" width="9" height="9" fill="#c8c8c8"/><rect x="5" y="5" width="5" height="5" fill="#535353"/><rect x="6" y="6" width="3" height="3" fill="#c8c8c8"/></svg>
<svg class="a" style="left:2087px;top:304px" width="16" height="16"><rect x="1.5" y="1.5" width="8.5" height="8.5" fill="none" stroke="#c8c8c8" stroke-width="1.2"/><rect x="5" y="5" width="9" height="9" fill="#c8c8c8"/></svg>
<svg class="a" style="left:2124px;top:304px" width="16" height="16"><rect x="1" y="1" width="9" height="9" fill="#c8c8c8"/><rect x="5" y="5" width="9" height="9" fill="#c8c8c8"/></svg>
<svg class="a" style="left:2160px;top:304px" width="16" height="16"><rect x="1.5" y="1.5" width="8.5" height="8.5" fill="none" stroke="#c8c8c8" stroke-width="1.2"/><rect x="5.5" y="5.5" width="8.5" height="8.5" fill="none" stroke="#c8c8c8" stroke-width="1.2"/><rect x="5.5" y="5.5" width="4.5" height="4.5" fill="#c8c8c8"/></svg>
<svg class="a" style="left:2198px;top:304px" width="16" height="16"><rect x="1.5" y="1.5" width="8.5" height="8.5" fill="none" stroke="#c8c8c8" stroke-width="1.2"/><rect x="5.5" y="5.5" width="8.5" height="8.5" fill="none" stroke="#c8c8c8" stroke-width="1.2"/><rect x="5.5" y="5.5" width="4.5" height="4.5" fill="none" stroke="#c8c8c8" stroke-width="1.2"/></svg>
<svg class="a" style="left:2236px;top:304px" width="16" height="16"><rect x="1.5" y="1.5" width="8.5" height="8.5" fill="#535353" stroke="#c8c8c8" stroke-width="1.2"/><rect x="6" y="6" width="9" height="9" fill="#c8c8c8"/></svg>
<div class="a" style="left:2026px;top:730px;width:239px;height:4px;background:#3a3a3a;"></div>
<div class="a" style="left:2026px;top:734px;width:239px;height:26px;background:#424242;"></div>
<div class="a" style="left:2026px;top:734px;width:57px;height:27px;background:#535353;"></div>
<div class="t" style="left:2034.2px;top:743.8px;font-size:10.3px;color:#f0f0f0;font-weight:normal;-webkit-text-stroke:0.35px #f0f0f0">Symbols</div>
<svg class="a" style="left:2249px;top:743px" width="11" height="9"><g fill="#c8c8c8"><rect x="0" y="0" width="11" height="1.2"/><rect x="0" y="2.5" width="11" height="1.2"/><rect x="0" y="5" width="11" height="1.2"/><rect x="0" y="7.5" width="11" height="1.2"/></g></svg>
<div class="a" style="left:2032px;top:767px;width:228px;height:772px;background:transparent;border:1px solid #4c4c4c;box-sizing:border-box;border-radius:3px"></div>
<div class="a" style="left:2033px;top:788px;width:226px;height:1px;background:#4a4a4a;"></div>
<div class="a" style="left:2038px;top:769px;width:18px;height:18px;background:#ebebeb;border:1px solid #2b2b2b;box-sizing:border-box"></div>
<svg class="a" style="left:2038px;top:769px" width="18" height="18"><rect x="3" y="8" width="12" height="2" fill="#8fb4e8"/></svg>
<div class="t" style="left:2061.4px;top:773.5px;font-size:10px;color:#e0e0e0;font-weight:normal;">Button_over</div>
<div class="a" style="left:2033px;top:809px;width:226px;height:1px;background:#4a4a4a;"></div>
<div class="a" style="left:2038px;top:790px;width:18px;height:18px;background:#ebebeb;border:1px solid #2b2b2b;box-sizing:border-box"></div>
<svg class="a" style="left:2038px;top:790px" width="18" height="18"><rect x="2" y="7" width="14" height="4" fill="#c8d4e4" stroke="#9ab"/></svg>
<div class="t" style="left:2061.4px;top:794.5px;font-size:10px;color:#e0e0e0;font-weight:normal;">TabBar-tab_over</div>
<div class="a" style="left:2033px;top:830px;width:226px;height:1px;background:#4a4a4a;"></div>
<div class="a" style="left:2038px;top:811px;width:18px;height:18px;background:#ebebeb;border:1px solid #2b2b2b;box-sizing:border-box"></div>
<svg class="a" style="left:2038px;top:811px" width="18" height="18"><rect x="2.5" y="4.5" width="13" height="9" fill="none" stroke="#a8c4ea"/></svg>
<div class="t" style="left:2061.4px;top:815.5px;font-size:10px;color:#e0e0e0;font-weight:normal;">TextArea_focus</div>
<div class="a" style="left:2033px;top:851px;width:226px;height:1px;background:#4a4a4a;"></div>
<div class="a" style="left:2038px;top:831px;width:18px;height:18px;background:#ebebeb;border:1px solid #2b2b2b;box-sizing:border-box"></div>
<svg class="a" style="left:2038px;top:831px" width="18" height="18"><rect x="2" y="8" width="14" height="2" fill="#a8c0e0"/></svg>
<div class="t" style="left:2061.4px;top:836.5px;font-size:10px;color:#e0e0e0;font-weight:normal;">PopUpButton_over</div>
<div class="a" style="left:2033px;top:872px;width:226px;height:1px;background:#4a4a4a;"></div>
<div class="a" style="left:2038px;top:852px;width:18px;height:18px;background:#ebebeb;border:1px solid #2b2b2b;box-sizing:border-box"></div>
<svg class="a" style="left:2038px;top:852px" width="18" height="18"><rect x="2.5" y="2.5" width="13" height="13" rx="2" fill="#f4f4f4" stroke="#8fb4e8"/><path d="M6,7 L12,7 L9,11Z" fill="#333"/></svg>
<div class="t" style="left:2061.4px;top:857.5px;font-size:10px;color:#e0e0e0;font-weight:normal;">Dropdown_over</div>
<div class="a" style="left:2033px;top:892px;width:226px;height:1px;background:#4a4a4a;"></div>
<div class="a" style="left:2038px;top:873px;width:18px;height:18px;background:#ebebeb;border:1px solid #2b2b2b;box-sizing:border-box"></div>
<svg class="a" style="left:2038px;top:873px" width="18" height="18"><rect x="2.5" y="2.5" width="13" height="13" rx="2" fill="#f4f4f4" stroke="#8fb4e8"/><path d="M6,6 L12,12 M12,6 L6,12" stroke="#222" stroke-width="1.8"/></svg>
<div class="t" style="left:2061.4px;top:878.5px;font-size:10px;color:#e0e0e0;font-weight:normal;">Panel_CloseButtonOver</div>
<div class="a" style="left:2033px;top:913px;width:226px;height:1px;background:#4a4a4a;"></div>
<div class="a" style="left:2038px;top:894px;width:18px;height:18px;background:#ebebeb;border:1px solid #2b2b2b;box-sizing:border-box"></div>
<svg class="a" style="left:2038px;top:894px" width="18" height="18"><rect x="2.5" y="3.5" width="13" height="12" fill="#fff" stroke="#3d7ad6"/><rect x="3" y="3" width="12" height="3" fill="#3d7ad6"/><g fill="#3d7ad6"><rect x="5" y="8" width="2" height="2"/><rect x="8" y="8" width="2" height="2"/><rect x="11" y="8" width="2" height="2"/><rect x="5" y="11" width="2" height="2"/><rect x="11" y="11" width="2" height="2"/></g><rect x="8" y="11" width="2" height="2" fill="#e22"/></svg>
<div class="t" style="left:2061.4px;top:898.5px;font-size:10px;color:#e0e0e0;font-weight:normal;">DateField_over</div>
<div class="a" style="left:2033px;top:934px;width:226px;height:1px;background:#4a4a4a;"></div>
<div class="a" style="left:2038px;top:915px;width:18px;height:18px;background:#ebebeb;border:1px solid #2b2b2b;box-sizing:border-box"></div>
<svg class="a" style="left:2038px;top:915px" width="18" height="18"><rect x="2.5" y="2.5" width="13" height="13" fill="none" stroke="#4a86d8" stroke-width="1.2" stroke-dasharray="1.5 1"/></svg>
<div class="t" style="left:2061.4px;top:919.5px;font-size:10px;color:#e0e0e0;font-weight:normal;">Film</div>
<div class="a" style="left:2033px;top:955px;width:226px;height:1px;background:#4a4a4a;"></div>
<div class="a" style="left:2038px;top:936px;width:18px;height:18px;background:#ebebeb;border:1px solid #2b2b2b;box-sizing:border-box"></div>
<svg class="a" style="left:2038px;top:936px" width="18" height="18"><circle cx="4.5" cy="13.5" r="2" fill="#4a86d8"/><path d="M3,8 A7,7 0 0 1 10,15 M3,3 A12,12 0 0 1 15,15" fill="none" stroke="#4a86d8" stroke-width="2.2"/></svg>
<div class="t" style="left:2061.4px;top:940.5px;font-size:10px;color:#e0e0e0;font-weight:normal;">RSS</div>
<div class="a" style="left:2033px;top:976px;width:226px;height:1px;background:#4a4a4a;"></div>
<div class="a" style="left:2038px;top:956px;width:18px;height:18px;background:#ebebeb;border:1px solid #2b2b2b;box-sizing:border-box"></div>
<svg class="a" style="left:2038px;top:956px" width="18" height="18"><circle cx="10" cy="7" r="4.5" fill="none" stroke="#4a86d8" stroke-width="2"/><path d="M7,10 L2.5,15" stroke="#4a86d8" stroke-width="2.5"/></svg>
<div class="t" style="left:2061.4px;top:961.5px;font-size:10px;color:#e0e0e0;font-weight:normal;">Search</div>
<div class="a" style="left:2033px;top:996px;width:226px;height:1px;background:#4a4a4a;"></div>
<div class="a" style="left:2038px;top:977px;width:18px;height:18px;background:#ebebeb;border:1px solid #2b2b2b;box-sizing:border-box"></div>
<svg class="a" style="left:2038px;top:977px" width="18" height="18"><rect x="2.5" y="4.5" width="13" height="9" rx="1.5" fill="none" stroke="#4a86d8" stroke-width="1.4"/><rect x="3" y="7" width="12" height="2" fill="#4a86d8"/></svg>
<div class="t" style="left:2061.4px;top:982.5px;font-size:10px;color:#e0e0e0;font-weight:normal;">Credit Card</div>
<div class="a" style="left:2033px;top:1017px;width:226px;height:1px;background:#4a4a4a;"></div>
<div class="a" style="left:2038px;top:998px;width:18px;height:18px;background:#ebebeb;border:1px solid #2b2b2b;box-sizing:border-box"></div>
<svg class="a" style="left:2038px;top:998px" width="18" height="18"><path d="M1,3 L4,3 L6,11 L14,11 L16,5 L5,5" fill="none" stroke="#4a86d8" stroke-width="1.6"/><circle cx="7" cy="14" r="1.4" fill="#4a86d8"/><circle cx="13" cy="14" r="1.4" fill="#4a86d8"/></svg>
<div class="t" style="left:2061.4px;top:1003.5px;font-size:10px;color:#e0e0e0;font-weight:normal;">Shopping Cart</div>
<div class="a" style="left:2033px;top:1038px;width:226px;height:1px;background:#4a4a4a;"></div>
<div class="a" style="left:2038px;top:1019px;width:18px;height:18px;background:#ebebeb;border:1px solid #2b2b2b;box-sizing:border-box"></div>
<svg class="a" style="left:2038px;top:1019px" width="18" height="18"><path d="M2,9 L9,2.5 L16,9 M4,8 L4,15 L14,15 L14,8 M7.5,15 L7.5,11 L10.5,11 L10.5,15" fill="none" stroke="#4a86d8" stroke-width="1.5"/></svg>
<div class="t" style="left:2061.4px;top:1023.5px;font-size:10px;color:#e0e0e0;font-weight:normal;">Home</div>
<div class="a" style="left:2033px;top:1059px;width:226px;height:1px;background:#4a4a4a;"></div>
<div class="a" style="left:2038px;top:1040px;width:18px;height:18px;background:#ebebeb;border:1px solid #2b2b2b;box-sizing:border-box"></div>
<svg class="a" style="left:2038px;top:1040px" width="18" height="18"><path d="M9,15 C3,10 1,7 3,4 C5,2 8,3 9,5 C10,3 13,2 15,4" fill="none" stroke="#4a86d8" stroke-width="1.6"/><path d="M12,9 L12,17 M8,13 L16,13" stroke="#e22" stroke-width="2.3"/></svg>
<div class="t" style="left:2061.4px;top:1044.5px;font-size:10px;color:#e0e0e0;font-weight:normal;">Add Favorite</div>
<div class="a" style="left:2033px;top:1080px;width:226px;height:1px;background:#4a4a4a;"></div>
<div class="a" style="left:2038px;top:1061px;width:18px;height:18px;background:#ebebeb;border:1px solid #2b2b2b;box-sizing:border-box"></div>
<svg class="a" style="left:2038px;top:1061px" width="18" height="18"><rect x="5" y="2.5" width="8" height="5" fill="none" stroke="#4a86d8" stroke-width="1.3"/><rect x="2.5" y="7" width="13" height="6" rx="1.5" fill="none" stroke="#4a86d8" stroke-width="1.4"/><rect x="5" y="11" width="8" height="4" fill="#fff" stroke="#4a86d8" stroke-width="1.2"/></svg>
<div class="t" style="left:2061.4px;top:1065.5px;font-size:10px;color:#e0e0e0;font-weight:normal;">Print</div>
<svg class="a" style="left:2037px;top:1544px" width="18" height="12"><path d="M1,1 L1,11 M3.5,2 L3.5,11 M6,2 L9.5,11 M11,10 L13,10" stroke="#d0d0d0" stroke-width="1.5"/></svg>
<svg class="a" style="left:2115px;top:1543px" width="14" height="12"><path d="M3,1 L3,8 L11,8 M8,5 L11,8 L8,11" fill="none" stroke="#6e6e6e" stroke-width="1.6"/></svg>
<svg class="a" style="left:2141px;top:1543px" width="16" height="12"><path d="M3,6 C3,2 8,2 8,6 M8,6 C8,10 13,10 13,6 M2,10 L14,2" fill="none" stroke="#6e6e6e" stroke-width="1.3"/></svg>
<svg class="a" style="left:2168px;top:1543px" width="13" height="13"><rect x="1" y="1" width="11" height="11" fill="none" stroke="#6e6e6e"/><path d="M3,4 h7 M3,6.5 h7 M3,9 h7" stroke="#6e6e6e"/></svg>
<svg class="a" style="left:2195px;top:1543px" width="12" height="12"><path d="M2,1 L11,1 L11,11 L6,11 L6,6 L2,6Z" fill="#7a7a7a"/></svg>
<svg class="a" style="left:2220px;top:1542px" width="12" height="14"><path d="M1,3 L11,3 M4,1 L8,1 M2,4 L2,13 L10,13 L10,4 M5,5 L5,12 M7,5 L7,12" fill="none" stroke="#6e6e6e" stroke-width="1.1"/></svg>
<div class="a" style="left:2268px;top:116px;width:37px;height:2px;background:#3e3e3e;"></div>
<div class="a" style="left:2268px;top:157px;width:37px;height:2px;background:#3e3e3e;"></div>
<div class="a" style="left:2268px;top:198px;width:37px;height:2px;background:#3e3e3e;"></div>
<div class="a" style="left:2268px;top:294px;width:37px;height:2px;background:#3e3e3e;"></div>
<div class="a" style="left:2276px;top:79px;width:20px;height:4px;background:repeating-linear-gradient(90deg,#2e2e2e 0 1px,transparent 1px 2.2px)"></div>
<div class="a" style="left:2276px;top:120px;width:20px;height:4px;background:repeating-linear-gradient(90deg,#2e2e2e 0 1px,transparent 1px 2.2px)"></div>
<div class="a" style="left:2276px;top:161px;width:20px;height:4px;background:repeating-linear-gradient(90deg,#2e2e2e 0 1px,transparent 1px 2.2px)"></div>
<div class="a" style="left:2276px;top:202px;width:20px;height:4px;background:repeating-linear-gradient(90deg,#2e2e2e 0 1px,transparent 1px 2.2px)"></div>
<svg class="a" style="left:2275px;top:90px" width="24" height="18"><path d="M6,16 C2,16 1,12 2.5,10 C1,6 5,4 8,5.5 C10,1.5 17,1.5 18.5,6 C22,6 23,10 21.5,12.5 C21,15 19,16 17,16Z" fill="none" stroke="#c8c8c8" stroke-width="1.8"/><path d="M8,13 C5,13 5,8.5 8,8.5 C11,8.5 13,13 16,13 C19,13 19,8.5 16,8.5 C13,8.5 11,13 8,13Z" fill="none" stroke="#c8c8c8" stroke-width="1.6"/></svg>
<svg class="a" style="left:2278px;top:131px" width="20" height="19"><path d="M9,3 L2,3 L2,17 L16,17 L16,10 M10,2 L17,2 L17,9 M17,2 L9,10" fill="none" stroke="#c8c8c8" stroke-width="1.8"/></svg>
<svg class="a" style="left:2277px;top:170px" width="20" height="22"><circle cx="9.5" cy="11" r="7.5" fill="#c8c8c8"/><path d="M9.5,2 A9,9 0 0 1 9.5,20" fill="none" stroke="#c8c8c8" stroke-width="1.3"/><path d="M9.5,3.5 A7.5,7.5 0 0 1 9.5,18.5" fill="none" stroke="#535353" stroke-width="1"/><circle cx="9.5" cy="2.5" r="1.6" fill="#c8c8c8"/><circle cx="9.5" cy="19.5" r="1.6" fill="#c8c8c8"/><circle cx="18.5" cy="11" r="1.5" fill="#c8c8c8"/></svg>
<svg class="a" style="left:2279px;top:213px" width="18" height="18"><rect x="2.5" y="2.5" width="12" height="12" fill="none" stroke="#c8c8c8" stroke-width="1.2"/><g fill="#c8c8c8"><rect x="1" y="1" width="3" height="3"/><rect x="7" y="1" width="3" height="3"/><rect x="13" y="1" width="3" height="3"/><rect x="1" y="7" width="3" height="3"/><rect x="13" y="7" width="3" height="3"/><rect x="1" y="13" width="3" height="3"/><rect x="7" y="13" width="3" height="3"/><rect x="13" y="13" width="3" height="3"/><rect x="8" y="8" width="1.2" height="1.2"/></g></svg>
<svg class="a" style="left:2279px;top:242px" width="16" height="18"><rect x="1" y="0" width="1.3" height="17" fill="#c8c8c8"/><rect x="3" y="2" width="7" height="5" fill="#c8c8c8"/><rect x="3" y="9" width="12" height="5" fill="#c8c8c8"/></svg>
<div class="a" style="left:2273px;top:266px;width:26px;height:22px;background:#323232;border-radius:2px"></div>
<svg class="a" style="left:2278px;top:269px" width="16" height="16"><rect x="1" y="1" width="9" height="9" fill="#c8c8c8"/><rect x="5" y="5" width="10" height="10" fill="#c8c8c8"/><rect x="5" y="5" width="5" height="5" fill="#888"/></svg>
<div class="a" style="left:2308px;top:76px;width:244px;height:27px;background:#424242;"></div>
<div class="a" style="left:2308px;top:76px;width:63px;height:28px;background:#535353;"></div>
<div class="a" style="left:2407.5px;top:77px;width:1px;height:26px;background:#3a3a3a;"></div>
<div class="t" style="left:2315.7px;top:85.3px;font-size:10.3px;color:#f0f0f0;font-weight:normal;-webkit-text-stroke:0.35px #f0f0f0">Navigator</div>
<div class="t" style="left:2379.7px;top:85.3px;font-size:10.3px;color:#a9a9a9;font-weight:normal;">Info</div>
<svg class="a" style="left:2535px;top:86px" width="11" height="9"><g fill="#c8c8c8"><rect x="0" y="0" width="11" height="1.2"/><rect x="0" y="2.5" width="11" height="1.2"/><rect x="0" y="5" width="11" height="1.2"/><rect x="0" y="7.5" width="11" height="1.2"/></g></svg>
<div class="a" style="left:2336px;top:104px;width:216px;height:163px;background:#ffffff;"></div>
<div class="a" style="left:2341px;top:128px;width:206px;height:116px;background:transparent;border:1.5px solid #8a8a8a;box-sizing:border-box"></div>
<div class="a" style="left:2425px;top:178px;width:7px;height:6px;background:#f04a4a;"></div>
<div class="a" style="left:2427px;top:180px;width:3px;height:2px;background:#333;"></div>
<div class="a" style="left:2423px;top:179px;width:2px;height:3px;background:#888;"></div>
<div class="a" style="left:2443px;top:185px;width:2px;height:2px;background:#bbb;"></div>
<svg class="a" style="left:2316px;top:281px" width="12" height="6"><path d="M0,6 L4,2 L6,3 L8,1 L12,6Z" fill="#c8c8c8"/></svg>
<div class="a" style="left:2337px;top:273px;width:52px;height:19px;background:#454545;border:1px solid #3f3f3f;box-sizing:border-box"></div>
<div class="a" style="left:2388px;top:273px;width:17px;height:19px;background:#4b4b4b;border:1px solid #3f3f3f;box-sizing:border-box"></div>
<div class="t" style="left:2339.2px;top:278.0px;font-size:10px;color:#e0e0e0;font-weight:normal;">6400%</div>
<svg class="a" style="left:2391.5px;top:278.5px" width="9.0" height="7.0"><path d="M1,1.75 L4.5,5.25 L8.0,1.75" fill="none" stroke="#e0e0e0" stroke-width="1.5"/></svg>
<svg class="a" style="left:2412px;top:276px" width="18" height="12"><path d="M0,11 L6,4 L8,6 L11,2 L17,11Z" fill="#c8c8c8"/></svg>
<div class="a" style="left:2308px;top:293px;width:244px;height:3px;background:#3a3a3a;"></div>
<div class="a" style="left:2308px;top:296px;width:244px;height:27px;background:#424242;"></div>
<div class="a" style="left:2308px;top:296px;width:48px;height:28px;background:#535353;"></div>
<div class="a" style="left:2429.5px;top:297px;width:1px;height:26px;background:#3a3a3a;"></div>
<div class="a" style="left:2510px;top:297px;width:1px;height:26px;background:#3a3a3a;"></div>
<div class="t" style="left:2320.2px;top:305.3px;font-size:10.3px;color:#f0f0f0;font-weight:normal;-webkit-text-stroke:0.35px #f0f0f0">Color</div>
<div class="t" style="left:2364.2px;top:305.3px;font-size:10.3px;color:#a9a9a9;font-weight:normal;">Color Guide</div>
<div class="t" style="left:2437.7px;top:305.3px;font-size:10.3px;color:#a9a9a9;font-weight:normal;">Color Themes</div>
<svg class="a" style="left:2535px;top:306px" width="11" height="9"><g fill="#c8c8c8"><rect x="0" y="0" width="11" height="1.2"/><rect x="0" y="2.5" width="11" height="1.2"/><rect x="0" y="5" width="11" height="1.2"/><rect x="0" y="7.5" width="11" height="1.2"/></g></svg>
<svg class="a" style="left:2311px;top:303px" width="8" height="13"><path d="M1,5 L4,2 L7,5 M1,8 L4,11 L7,8" fill="none" stroke="#c8c8c8" stroke-width="1.2"/></svg>
<div class="a" style="left:2313px;top:332px;width:39px;height:14px;background:#222;"></div>
<div class="a" style="left:2314px;top:333px;width:12px;height:12px;background:#fff;"></div><div class="a" style="left:2326px;top:333px;width:13px;height:12px;background:#000;"></div><div class="a" style="left:2339px;top:333px;width:12px;height:12px;background:#fff;"></div>
<svg class="a" style="left:2314px;top:333px" width="12" height="12"><path d="M0,12 L12,0" stroke="#e2231a" stroke-width="1.8"/></svg>
<div class="a" style="left:2314px;top:356px;width:220px;height:122px;background:linear-gradient(90deg,#ffffff 0%,#d9d9db 12%,#b4b5b8 32%,#96979b 48%,#707175 68%,#4e4e50 85%,#2e2e2e 100%);border:1px solid #3a3a3a;box-sizing:border-box"></div>
<div class="a" style="left:2308px;top:485px;width:244px;height:3px;background:#3a3a3a;"></div>
<div class="a" style="left:2308px;top:488px;width:244px;height:27px;background:#424242;"></div>
<div class="a" style="left:2369px;top:489px;width:1px;height:26px;background:#3a3a3a;"></div>
<div class="a" style="left:2369px;top:488px;width:53px;height:28px;background:#535353;"></div>
<div class="t" style="left:2315.7px;top:497.3px;font-size:10.3px;color:#a9a9a9;font-weight:normal;">Swatches</div>
<div class="t" style="left:2377.7px;top:497.3px;font-size:10.3px;color:#f0f0f0;font-weight:normal;-webkit-text-stroke:0.35px #f0f0f0">Brushes</div>
<svg class="a" style="left:2535px;top:498px" width="11" height="9"><g fill="#c8c8c8"><rect x="0" y="0" width="11" height="1.2"/><rect x="0" y="2.5" width="11" height="1.2"/><rect x="0" y="5" width="11" height="1.2"/><rect x="0" y="7.5" width="11" height="1.2"/></g></svg>
<div class="a" style="left:2313px;top:520px;width:233px;height:195px;background:transparent;border:1px solid #4c4c4c;box-sizing:border-box;border-radius:3px"></div>
<div class="a" style="left:2314px;top:521px;width:32px;height:32px;background:#e4e4e4;border-right:1px solid #555;box-sizing:border-box"></div>
<div class="a" style="left:2346px;top:521px;width:32px;height:32px;background:#e4e4e4;border-right:1px solid #555;box-sizing:border-box"></div>
<div class="a" style="left:2379px;top:521px;width:32px;height:32px;background:#e4e4e4;border-right:1px solid #555;box-sizing:border-box"></div>
<div class="a" style="left:2412px;top:521px;width:32px;height:32px;background:#e4e4e4;border-right:1px solid #555;box-sizing:border-box"></div>
<div class="a" style="left:2328px;top:536px;width:2px;height:2px;background:#000;border-radius:1px"></div>
<div class="a" style="left:2357px;top:532px;width:10px;height:10px;background:#000;border-radius:5px"></div>
<div class="a" style="left:2395px;top:533px;width:1px;height:7px;background:#aaa;"></div>
<div class="a" style="left:2422px;top:531px;width:12px;height:12px;background:#000;border-radius:6px"></div>
<div class="a" style="left:2313px;top:554px;width:218px;height:32px;background:#e4e4e4;border-bottom:1px solid #777;box-sizing:border-box"></div>
<div class="a" style="left:2313px;top:587px;width:218px;height:32px;background:#e4e4e4;border-bottom:1px solid #777;box-sizing:border-box"></div>
<div class="a" style="left:2313px;top:620px;width:218px;height:32px;background:#e4e4e4;border-bottom:1px solid #777;box-sizing:border-box"></div>
<div class="a" style="left:2313px;top:653px;width:218px;height:32px;background:#e4e4e4;border-bottom:1px solid #777;box-sizing:border-box"></div>
<div class="a" style="left:2318px;top:569px;width:182px;height:2px;background:#111;"></div>
<div class="t" style="left:2503.2px;top:566.5px;font-size:10px;color:#223;font-weight:normal;">Basic</div>
<svg class="a" style="left:2318px;top:597px" width="210" height="10"><path d="M1,5.5 L30,4.3 L60,5.2 L90,4 L120,4.6 L150,4.2 L180,4.8 L207,5 L180,5.8 L150,6.2 L120,6.4 L90,6.6 L60,6.8 L30,7.2 L1,7Z" fill="#2a2a2a"/><path d="M4,6 h200" stroke="#444" stroke-width="1" stroke-dasharray="3 2 5 1"/></svg>
<svg class="a" style="left:2320px;top:631px" width="18" height="10"><path d="M0,2 L9,2 L16,5 L9,8 L0,8Z" fill="#444"/><rect x="0" y="3" width="5" height="4" fill="#fff"/></svg>
<div class="t" style="left:2344.2px;top:631.1px;font-size:10.5px;color:#1e1e3a;font-weight:normal;">3.00</div>
<svg class="a" style="left:2390px;top:625px" width="130" height="22"><path d="M3,11 C25,3 50,2 75,10 C100,18 115,17 127,11" fill="none" stroke="#5a5a5a" stroke-width="3" stroke-linecap="round"/></svg>
<svg class="a" style="left:2313px;top:653px" width="218" height="32"><path d="M14,32 L14,14 L115,14 L115,2" fill="none" stroke="#9c7050" stroke-width="11"/><path d="M14,32 L14,14 L115,14 L115,2" fill="none" stroke="#6e4a30" stroke-width="11" stroke-dasharray="1 2 1 3" opacity="0.5"/><path d="M14,32 L14,14 L115,14 L115,2" fill="none" stroke="#f4eee8" stroke-width="1.6" stroke-dasharray="5 2"/><path d="M14,32 L14,14 L115,14 L115,2" fill="none" stroke="#1a2040" stroke-width="1.6" stroke-dasharray="1.5 5.5"/><g fill="#222"><rect x="32" y="0" width="1" height="3"/><rect x="65" y="0" width="1" height="3"/><rect x="98" y="0" width="1" height="3"/><rect x="131" y="0" width="1" height="3"/><rect x="163" y="0" width="1" height="3"/><rect x="32" y="29" width="1" height="3"/><rect x="65" y="29" width="1" height="3"/><rect x="98" y="29" width="1" height="3"/><rect x="131" y="29" width="1" height="3"/><rect x="163" y="29" width="1" height="3"/></g></svg>
<svg class="a" style="left:2318px;top:718px" width="34" height="14"><path d="M1,1 L1,11 M3.5,2 L3.5,11 M6,2 L9.5,11 M11,10 L13,10" stroke="#d0d0d0" stroke-width="1.5"/><rect x="25" y="3" width="8" height="7" fill="#c8c8c8"/><ellipse cx="29" cy="9" rx="7" ry="4.5" fill="none" stroke="#c8c8c8" stroke-width="1.5"/></svg>
<svg class="a" style="left:2434px;top:718px" width="14" height="14"><path d="M2,2 L12,12 M12,2 L2,12" stroke="#6e6e6e" stroke-width="1.8"/></svg>
<svg class="a" style="left:2460px;top:718px" width="13" height="13"><rect x="1" y="1" width="11" height="11" fill="none" stroke="#6e6e6e"/><path d="M3,4 h7 M3,6.5 h7 M3,9 h7" stroke="#6e6e6e"/></svg>
<svg class="a" style="left:2486px;top:718px" width="12" height="12"><path d="M2,1 L11,1 L11,11 L6,11 L6,6 L2,6Z" fill="#c8c8c8"/></svg>
<svg class="a" style="left:2511px;top:717px" width="12" height="14"><path d="M1,3 L11,3 M4,1 L8,1 M2,4 L2,13 L10,13 L10,4 M5,5 L5,12 M7,5 L7,12" fill="none" stroke="#6e6e6e" stroke-width="1.1"/></svg>
<div class="a" style="left:2308px;top:734px;width:244px;height:3px;background:#3a3a3a;"></div>
<div class="a" style="left:2308px;top:737px;width:244px;height:27px;background:#424242;"></div>
<div class="a" style="left:2357px;top:738px;width:1px;height:26px;background:#3a3a3a;"></div>
<div class="a" style="left:2357px;top:737px;width:63px;height:28px;background:#535353;"></div>
<div class="a" style="left:2498px;top:738px;width:1px;height:26px;background:#3a3a3a;"></div>
<div class="t" style="left:2315.7px;top:746.3px;font-size:10.3px;color:#a9a9a9;font-weight:normal;">Stroke</div>
<div class="t" style="left:2371.2px;top:746.3px;font-size:10.3px;color:#f0f0f0;font-weight:normal;-webkit-text-stroke:0.35px #f0f0f0">Gradient</div>
<div class="t" style="left:2428.2px;top:746.3px;font-size:10.3px;color:#a9a9a9;font-weight:normal;">Transparency</div>
<svg class="a" style="left:2535px;top:747px" width="11" height="9"><g fill="#c8c8c8"><rect x="0" y="0" width="11" height="1.2"/><rect x="0" y="2.5" width="11" height="1.2"/><rect x="0" y="5" width="11" height="1.2"/><rect x="0" y="7.5" width="11" height="1.2"/></g></svg>
<svg class="a" style="left:2361px;top:744px" width="8" height="13"><path d="M1,5 L4,2 L7,5 M1,8 L4,11 L7,8" fill="none" stroke="#c8c8c8" stroke-width="1.2"/></svg>
<div class="a" style="left:2313px;top:770px;width:31px;height:31px;background:linear-gradient(90deg,#fff,#222);border:1px solid #333;box-sizing:border-box"></div>
<svg class="a" style="left:2347px;top:783px" width="8" height="5"><path d="M0,0 L7,0 L3.5,4Z" fill="#c8c8c8"/></svg>
<div class="t" style="left:2369.2px;top:777.5px;font-size:10px;color:#d6d6d6;font-weight:normal;">Type:</div>
<div class="a" style="left:2397px;top:770px;width:148px;height:20px;background:#474747;border:1px solid #3f3f3f;box-sizing:border-box;border-radius:3px"></div>
<svg class="a" style="left:2531px;top:776.5px" width="10" height="8"><path d="M1,2.0 L5,6.0 L9,2.0" fill="none" stroke="#e8e8e8" stroke-width="1.6"/></svg>
<div class="t" style="left:2362.2px;top:803.0px;font-size:10px;color:#777;font-weight:normal;">Stroke:</div>
<div class="a" style="left:2397px;top:796px;width:67px;height:20px;background:transparent;border:1px solid #4c4c4c;box-sizing:border-box;border-radius:2px"></div>
<svg class="a" style="left:2400px;top:799px" width="16" height="16"><path d="M2,15 L2,2 L14,2 L14,7 L7,7 L7,15Z" fill="#6a6a6a"/></svg>
<svg class="a" style="left:2422px;top:799px" width="16" height="16"><path d="M2,15 L2,2 L14,2 L14,7 L7,7 L7,15Z" fill="#6a6a6a"/></svg>
<svg class="a" style="left:2445px;top:799px" width="16" height="16"><path d="M2,15 L2,2 L14,2 L14,7 L7,7 L7,15Z" fill="#6a6a6a"/></svg>
<div class="a" style="left:2324px;top:817px;width:19px;height:19px;background:#fff;border:1px solid #555;box-sizing:border-box"></div>
<svg class="a" style="left:2324px;top:817px" width="19" height="19"><rect x="6" y="6" width="7" height="7" fill="none" stroke="#222" stroke-width="1.5"/><path d="M1,18 L18,1" stroke="#e2231a" stroke-width="1.8"/></svg>
<div class="a" style="left:2314px;top:808px;width:19px;height:19px;background:#000;border:1.5px solid #e8e8e8;box-sizing:border-box"></div>
<svg class="a" style="left:2377px;top:826px" width="16" height="14"><path d="M1,13 L15,13 M1,13 L11,2 M8,6 A6,6 0 0 1 12,13" fill="none" stroke="#6a6a6a" stroke-width="1.1"/></svg>
<div class="a" style="left:2397px;top:823px;width:69px;height:21px;background:#595959;border-radius:2px"></div>
<svg class="a" style="left:2451.5px;top:830.0px" width="9.0" height="7.0"><path d="M1,1.75 L4.5,5.25 L8.0,1.75" fill="none" stroke="#6a6a6a" stroke-width="1.3"/></svg>
<svg class="a" style="left:2321px;top:847px" width="16" height="16"><rect x="1" y="1" width="7" height="5" fill="none" stroke="#666"/><rect x="5" y="9" width="7" height="5" fill="none" stroke="#666"/><path d="M10,3 L14,3 L12,5Z M1,12 L3,10 L4,12Z" fill="#666"/></svg>
<svg class="a" style="left:2376px;top:851px" width="18" height="16"><path d="M2,1 L2,14 M0,3 L2,1 L4,3 M0,12 L2,14 L4,12 M5,15 L17,15" fill="none" stroke="#6a6a6a" stroke-width="1"/><ellipse cx="11" cy="8" rx="6" ry="4" fill="none" stroke="#6a6a6a" stroke-width="1.2"/></svg>
<div class="a" style="left:2397px;top:849px;width:69px;height:21px;background:#595959;border-radius:2px"></div>
<svg class="a" style="left:2451.5px;top:856.0px" width="9.0" height="7.0"><path d="M1,1.75 L4.5,5.25 L8.0,1.75" fill="none" stroke="#6a6a6a" stroke-width="1.3"/></svg>
<div class="a" style="left:2318px;top:882px;width:197px;height:24px;background:linear-gradient(90deg,#fff 0%,#d8d8d8 15%,#a8a8a8 35%,#7f7f7f 55%,#595656 75%,#2f2c2c 100%);border:1px solid #333;box-sizing:border-box"></div>
<svg class="a" style="left:2527px;top:886px" width="12" height="14"><path d="M1,3 L11,3 M4,1 L8,1 M2,4 L2,13 L10,13 L10,4 M5,5 L5,12 M7,5 L7,12" fill="none" stroke="#6e6e6e" stroke-width="1.1"/></svg>
<div class="t" style="left:2357.2px;top:938.5px;font-size:10px;color:#6e6e6e;font-weight:normal;">Opacity:</div>
<div class="a" style="left:2397px;top:932px;width:69px;height:21px;background:#595959;border-radius:2px"></div>
<svg class="a" style="left:2451.5px;top:938.5px" width="9.0" height="7.0"><path d="M1,1.75 L4.5,5.25 L8.0,1.75" fill="none" stroke="#6a6a6a" stroke-width="1.3"/></svg>
<div class="t" style="left:2353.2px;top:964.0px;font-size:10px;color:#6e6e6e;font-weight:normal;">Location:</div>
<div class="a" style="left:2397px;top:958px;width:69px;height:21px;background:#595959;border-radius:2px"></div>
<svg class="a" style="left:2451.5px;top:964.5px" width="9.0" height="7.0"><path d="M1,1.75 L4.5,5.25 L8.0,1.75" fill="none" stroke="#6a6a6a" stroke-width="1.3"/></svg>
<div class="a" style="left:2308px;top:984px;width:244px;height:3px;background:#3a3a3a;"></div>
<div class="a" style="left:2308px;top:987px;width:244px;height:26px;background:#424242;"></div>
<div class="a" style="left:2308px;top:987px;width:71px;height:27px;background:#535353;"></div>
<div class="t" style="left:2315.7px;top:996.3px;font-size:10.3px;color:#f0f0f0;font-weight:normal;-webkit-text-stroke:0.35px #f0f0f0">Appearance</div>
<svg class="a" style="left:2535px;top:997px" width="11" height="9"><g fill="#c8c8c8"><rect x="0" y="0" width="11" height="1.2"/><rect x="0" y="2.5" width="11" height="1.2"/><rect x="0" y="5" width="11" height="1.2"/><rect x="0" y="7.5" width="11" height="1.2"/></g></svg>
<div class="a" style="left:2313px;top:1020px;width:232px;height:193px;background:transparent;border:1px solid #4c4c4c;box-sizing:border-box;border-radius:3px"></div>
<div class="a" style="left:2316px;top:1023px;width:19px;height:19px;background:#000;border:1.5px solid #e0e0e0;box-sizing:border-box"></div>
<div class="t" style="left:2362.2px;top:1029.3px;font-size:10.3px;color:#e8e8e8;font-weight:bold;">No Selection</div>
<div class="a" style="left:2314px;top:1044px;width:230px;height:1px;background:#4a4a4a;"></div>
<div class="a" style="left:2314px;top:1069px;width:230px;height:1px;background:#4a4a4a;"></div>
<div class="a" style="left:2314px;top:1094px;width:230px;height:1px;background:#4a4a4a;"></div>
<div class="a" style="left:2314px;top:1119px;width:230px;height:1px;background:#4a4a4a;"></div>
<div class="a" style="left:2314px;top:1144px;width:230px;height:1px;background:#4a4a4a;"></div>
<div class="a" style="left:2314px;top:1169px;width:230px;height:1px;background:#4a4a4a;"></div>
<div class="a" style="left:2337px;top:1045px;width:1px;height:124px;background:#3c3c3c;"></div>
<svg class="a" style="left:2318px;top:1052px" width="15" height="10"><path d="M1,5 C4,0 11,0 14,5 C11,10 4,10 1,5Z" fill="#d0d0d0"/><circle cx="7.5" cy="5" r="2.3" fill="#535353"/><circle cx="7" cy="4.5" r="1" fill="#d0d0d0"/></svg>
<svg class="a" style="left:2318px;top:1101px" width="15" height="10"><path d="M1,5 C4,0 11,0 14,5 C11,10 4,10 1,5Z" fill="#d0d0d0"/><circle cx="7.5" cy="5" r="2.3" fill="#535353"/><circle cx="7" cy="4.5" r="1" fill="#d0d0d0"/></svg>
<svg class="a" style="left:2318px;top:1077px" width="15" height="10"><path d="M1,5 C4,0 11,0 14,5 C11,10 4,10 1,5Z" fill="#6a6a6a"/><circle cx="7.5" cy="5" r="2.3" fill="#535353"/><circle cx="7" cy="4.5" r="1" fill="#6a6a6a"/></svg>
<svg class="a" style="left:2318px;top:1126px" width="15" height="10"><path d="M1,5 C4,0 11,0 14,5 C11,10 4,10 1,5Z" fill="#6a6a6a"/><circle cx="7.5" cy="5" r="2.3" fill="#535353"/><circle cx="7" cy="4.5" r="1" fill="#6a6a6a"/></svg>
<svg class="a" style="left:2318px;top:1151px" width="15" height="10"><path d="M1,5 C4,0 11,0 14,5 C11,10 4,10 1,5Z" fill="#6a6a6a"/><circle cx="7.5" cy="5" r="2.3" fill="#535353"/><circle cx="7" cy="4.5" r="1" fill="#6a6a6a"/></svg>
<svg class="a" style="left:2343.5px;top:1053.5px" width="9.0" height="7.0"><path d="M1,1.75 L4.5,5.25 L8.0,1.75" fill="none" stroke="#d8d8d8" stroke-width="1.5"/></svg>
<svg class="a" style="left:2343.5px;top:1102.5px" width="9.0" height="7.0"><path d="M1,1.75 L4.5,5.25 L8.0,1.75" fill="none" stroke="#d8d8d8" stroke-width="1.5"/></svg>
<div class="t" style="left:2362.2px;top:1052.5px;font-size:10px;color:#e0e0e0;font-weight:normal;">Stroke:</div><div class="a" style="left:2363px;top:1064px;width:31px;height:1px;background:repeating-linear-gradient(90deg,#a8a8a8 0 1px,transparent 1px 2px)"></div>
<div class="a" style="left:2405px;top:1049px;width:17px;height:17px;background:#fff;border:1px solid #1a1a1a;outline:1px solid #ccc;box-sizing:border-box"></div>
<svg class="a" style="left:2407px;top:1051px" width="13" height="13"><path d="M2,11 L11,2" stroke="#e2231a" stroke-width="2"/></svg>
<div class="t" style="left:2385.2px;top:1077.5px;font-size:10px;color:#e0e0e0;font-weight:normal;">Opacity:</div><div class="a" style="left:2386px;top:1089px;width:37px;height:1px;background:repeating-linear-gradient(90deg,#a8a8a8 0 1px,transparent 1px 2px)"></div>
<div class="t" style="left:2427.2px;top:1077.5px;font-size:10px;color:#e0e0e0;font-weight:normal;">Default</div>
<div class="t" style="left:2362.2px;top:1101.5px;font-size:10px;color:#e0e0e0;font-weight:normal;">Fill:</div>
<div class="a" style="left:2405px;top:1099px;width:17px;height:17px;background:#fff;border:1px solid #1a1a1a;outline:1px solid #ccc;box-sizing:border-box"></div>
<div class="a" style="left:2408px;top:1102px;width:11px;height:11px;background:#000;"></div>
<div class="t" style="left:2385.2px;top:1126.5px;font-size:10px;color:#e0e0e0;font-weight:normal;">Opacity:</div><div class="a" style="left:2386px;top:1138px;width:37px;height:1px;background:repeating-linear-gradient(90deg,#a8a8a8 0 1px,transparent 1px 2px)"></div>
<div class="t" style="left:2427.2px;top:1126.5px;font-size:10px;color:#e0e0e0;font-weight:normal;">Default</div>
<div class="t" style="left:2362.2px;top:1151.5px;font-size:10px;color:#e0e0e0;font-weight:normal;">Opacity:</div><div class="a" style="left:2363px;top:1163px;width:37px;height:1px;background:repeating-linear-gradient(90deg,#a8a8a8 0 1px,transparent 1px 2px)"></div>
<div class="t" style="left:2404.2px;top:1151.5px;font-size:10px;color:#e0e0e0;font-weight:normal;">Default</div>
<svg class="a" style="left:2318px;top:1217px" width="13" height="13"><rect x="1.5" y="1.5" width="10" height="10" fill="none" stroke="#d0d0d0" stroke-width="1.6"/></svg>
<svg class="a" style="left:2344px;top:1217px" width="13" height="13"><rect x="1.5" y="1.5" width="10" height="10" fill="none" stroke="#d0d0d0" stroke-width="1.6"/><rect x="3.5" y="3.5" width="6" height="6" fill="#aaa"/></svg>
<div class="t" style="left:2369.1px;top:1217.8px;font-size:12px;color:#c0c0c0;font-weight:normal;font-family:"Liberation Serif",serif"><i>fx</i></div>
<svg class="a" style="left:2381px;top:1225px" width="6" height="4"><path d="M0,0 L5,0 L2.5,3Z" fill="#c0c0c0"/></svg>
<svg class="a" style="left:2460px;top:1217px" width="13" height="13"><circle cx="6.5" cy="6.5" r="5" fill="none" stroke="#d0d0d0" stroke-width="1.8"/><path d="M3,3 L10,10" stroke="#d0d0d0" stroke-width="1.8"/></svg>
<svg class="a" style="left:2486px;top:1217px" width="12" height="12"><path d="M2,1 L11,1 L11,11 L6,11 L6,6 L2,6Z" fill="#6e6e6e"/></svg>
<svg class="a" style="left:2511px;top:1216px" width="12" height="14"><path d="M1,3 L11,3 M4,1 L8,1 M2,4 L2,13 L10,13 L10,4 M5,5 L5,12 M7,5 L7,12" fill="none" stroke="#6e6e6e" stroke-width="1.1"/></svg>
<div class="a" style="left:2308px;top:1233px;width:244px;height:3px;background:#3a3a3a;"></div>
<div class="a" style="left:2308px;top:1236px;width:244px;height:26px;background:#424242;"></div>
<div class="a" style="left:2308px;top:1236px;width:45px;height:27px;background:#535353;"></div>
<div class="a" style="left:2417.6px;top:1237px;width:1px;height:25px;background:#3a3a3a;"></div>
<div class="t" style="left:2315.7px;top:1245.3px;font-size:10.3px;color:#f0f0f0;font-weight:normal;-webkit-text-stroke:0.35px #f0f0f0">Layers</div>
<div class="t" style="left:2361.7px;top:1245.3px;font-size:10.3px;color:#a9a9a9;font-weight:normal;">Artboards</div>
<svg class="a" style="left:2535px;top:1246px" width="11" height="9"><g fill="#c8c8c8"><rect x="0" y="0" width="11" height="1.2"/><rect x="0" y="2.5" width="11" height="1.2"/><rect x="0" y="5" width="11" height="1.2"/><rect x="0" y="7.5" width="11" height="1.2"/></g></svg>
<div class="a" style="left:2313px;top:1269px;width:233px;height:271px;background:transparent;border:1px solid #4c4c4c;box-sizing:border-box;border-radius:3px"></div>
<div class="a" style="left:2314px;top:1270px;width:231px;height:20px;background:#4d5e7a;"></div>
<div class="a" style="left:2333px;top:1270px;width:1px;height:20px;background:#435470;"></div><div class="a" style="left:2354px;top:1270px;width:1px;height:20px;background:#435470;"></div><div class="a" style="left:2509px;top:1270px;width:1px;height:20px;background:#435470;"></div>
<svg class="a" style="left:2317px;top:1275px" width="15" height="10"><path d="M1,5 C4,0 11,0 14,5 C11,10 4,10 1,5Z" fill="#c8c8c8"/><circle cx="7.5" cy="5" r="2.3" fill="#4d5e7a"/><circle cx="7" cy="4.5" r="1" fill="#c8c8c8"/></svg>
<div class="a" style="left:2356px;top:1271px;width:3px;height:18px;background:#4a7ef0;"></div>
<svg class="a" style="left:2366px;top:1274px" width="8" height="11"><path d="M2,1.5 L6,5.5 L2,9.5" fill="none" stroke="#e0e0e0" stroke-width="1.5"/></svg>
<div class="a" style="left:2385px;top:1271px;width:18px;height:18px;background:#fff;border:1px solid #111;box-sizing:border-box"></div>
<div class="t" style="left:2407.2px;top:1276.3px;font-size:10.3px;color:#e8e8e8;font-weight:normal;">Layer 1</div>
<svg class="a" style="left:2515px;top:1274px" width="11" height="11"><circle cx="5.5" cy="5.5" r="4" fill="none" stroke="#d0d0d0" stroke-width="1.3"/></svg>
<svg class="a" style="left:2538px;top:1270px" width="7" height="7"><path d="M0,0 L7,0 L7,7Z" fill="#ddd"/></svg>
<div class="t" style="left:2312.2px;top:1546.5px;font-size:10px;color:#d0d0d0;font-weight:normal;">1 Layer</div>
<svg class="a" style="left:2408px;top:1543px" width="14" height="14"><circle cx="8" cy="6" r="4.5" fill="none" stroke="#6e6e6e" stroke-width="1.5"/><path d="M5,9 L1,13" stroke="#6e6e6e" stroke-width="1.8"/></svg>
<svg class="a" style="left:2434px;top:1543px" width="14" height="14"><rect x="1.5" y="1.5" width="8" height="8" fill="none" stroke="#c8c8c8" stroke-width="1.3"/><rect x="4.5" y="4.5" width="8" height="8" fill="none" stroke="#c8c8c8" stroke-width="1.3"/><rect x="4.5" y="4.5" width="5" height="5" fill="#c8c8c8"/></svg>
<svg class="a" style="left:2458px;top:1543px" width="16" height="14"><path d="M1,2 L1,6 L6,6 M4,4 L6,6 L4,8" fill="none" stroke="#c8c8c8" stroke-width="1.3"/><path d="M8,1 L15,1 L15,13 L11,13 L11,7 L8,7Z" fill="#c8c8c8"/></svg>
<svg class="a" style="left:2486px;top:1543px" width="13" height="13"><path d="M2,1 L12,1 L12,12 L6,12 L6,6 L2,6Z" fill="#c8c8c8"/></svg>
<svg class="a" style="left:2511px;top:1542px" width="12" height="15"><path d="M1,3 L11,3 M4,1 L8,1 M2,4 L2,14 L10,14 L10,4 M5,5 L5,13 M7,5 L7,13" fill="none" stroke="#6e6e6e" stroke-width="1.1"/></svg>
<!-- ARTWORK -->
<svg class="a" style="left:0;top:0" width="2560" height="1568" viewBox="0 0 2560 1568">
<rect x="568" y="276" width="954" height="954" fill="#52904a"/>
<g fill="#000">
<path d="M804.2,346.8 C799.5,344.1 794.0,337.3 781.0,332.9 C768.0,328.5 753.6,325.3 739.2,324.8 C724.8,324.3 721.6,325.5 709.0,330.6 C696.5,335.7 686.8,340.8 676.6,350.3 C666.4,359.8 662.4,368.0 658.0,378.2 C653.6,388.4 654.3,391.6 654.5,401.4 C654.8,411.1 655.2,417.6 659.2,426.9 C663.1,436.2 666.6,440.8 674.2,447.8 C681.9,454.7 691.6,456.6 697.4,461.7 C703.2,466.8 699.8,470.5 703.2,473.3 C706.7,476.1 712.5,479.8 714.8,475.6 C717.2,471.4 716.0,457.5 714.8,452.4 C713.7,447.3 713.5,452.2 709.0,450.1 C704.6,448.0 698.8,446.6 692.8,442.0 C686.8,437.3 682.6,435.0 678.9,426.9 C675.2,418.8 674.2,411.1 674.2,401.4 C674.2,391.6 674.2,387.0 678.9,378.2 C683.5,369.4 685.4,364.9 697.4,357.3 C709.5,349.6 723.4,343.4 739.2,339.9 C755.0,336.4 763.3,338.5 776.3,339.9 C789.3,341.3 798.6,345.5 804.2,346.8 C809.7,348.2 808.8,349.6 804.2,346.8Z"/>
<path d="M705.3,450.7 C707.0,449.4 713.1,450.8 714.3,451.3 C715.5,451.9 715.4,452.7 715.5,455.5 C715.5,458.4 714.6,472.9 714.9,475.8 C715.1,478.7 717.5,467.3 717.9,480.6 C718.2,493.8 717.8,575.4 718.1,589.2 C718.4,602.9 720.0,596.3 720.2,598.7 C720.5,601.1 720.6,607.4 720.2,609.5 C719.9,611.5 718.4,615.3 717.3,616.6 C716.1,617.9 712.6,620.3 710.7,620.8 C708.8,621.3 703.4,621.6 701.1,620.8 C698.9,620.0 693.1,615.8 691.6,614.2 C690.1,612.6 688.8,609.3 688.6,607.1 C688.4,604.8 689.0,597.2 689.8,595.1 C690.6,593.0 694.4,591.8 695.2,589.2 C695.9,586.5 696.7,575.2 696.4,572.5 C696.0,569.7 692.2,566.8 692.2,565.9 C692.2,565.0 696.0,574.1 696.4,564.7 C696.7,555.3 694.9,495.6 695.4,485.3 C696.0,475.1 700.3,479.1 701.1,477.0 C702.0,474.9 702.5,469.1 702.3,467.4 C702.2,465.8 699.6,464.6 700.0,462.7 C700.3,460.7 703.7,452.1 705.3,450.7Z"/>
<path d="M683.8,558.1 C682.6,560.8 675.2,555.3 671.3,553.4 C667.5,551.4 660.2,547.2 658.2,545.0 C656.2,542.8 660.3,539.8 658.2,538.4 C656.0,537.1 646.9,537.4 643.9,536.1 C640.8,534.7 638.3,531.2 637.9,529.5 C637.5,527.8 640.0,525.8 640.9,524.7 C641.8,523.7 645.0,524.1 643.9,522.3 C642.7,520.5 635.5,516.4 633.1,512.8 C630.7,509.2 628.0,501.2 627.8,498.5 C627.5,495.7 630.3,495.0 631.3,494.3 C632.4,493.6 633.7,497.8 634.9,493.7 C636.2,489.6 638.1,471.4 639.7,466.8 C641.3,462.3 643.8,463.2 645.7,463.3 C647.5,463.4 649.8,464.3 652.2,467.4 C654.6,470.6 659.8,482.4 661.8,484.2 C663.7,485.9 664.1,480.1 665.3,479.4 C666.6,478.7 669.0,478.1 670.1,479.4 C671.3,480.6 672.6,484.1 673.1,487.7 C673.6,491.4 672.5,501.3 673.7,503.8 C674.9,506.3 679.4,503.6 680.9,504.4 C682.3,505.2 683.6,506.6 683.2,509.2 C682.9,511.8 678.3,520.0 678.5,521.7 C678.7,523.5 683.4,520.5 684.4,521.1 C685.5,521.8 686.3,523.8 685.6,525.9 C684.9,528.1 679.9,530.6 679.7,535.5 C679.4,540.3 685.1,555.5 683.8,558.1Z"/>
<path d="M717.9,591.6 C718.8,590.4 723.0,587.7 725.0,585.6 C727.0,583.4 729.8,581.2 731.0,577.2 C732.1,573.3 733.3,563.3 732.8,559.3 C732.2,555.4 728.1,553.2 727.4,551.0 C726.7,548.7 726.9,545.4 728.0,544.4 C729.1,543.4 734.3,545.8 734.6,544.4 C734.8,543.1 730.3,538.0 729.8,535.5 C729.2,533.0 729.5,528.8 731.0,527.7 C732.4,526.6 738.0,531.4 739.3,528.3 C740.7,525.2 739.2,510.6 739.9,506.8 C740.6,503.1 742.6,503.3 744.1,503.2 C745.6,503.2 747.6,508.2 750.1,506.2 C752.6,504.3 758.1,493.0 760.8,490.1 C763.5,487.3 766.2,487.0 768.0,487.1 C769.8,487.3 771.5,487.6 772.7,491.3 C774.0,495.0 775.1,507.1 776.3,511.6 C777.6,516.1 780.7,517.9 781.1,521.1 C781.5,524.4 780.5,529.5 778.7,533.1 C776.9,536.7 769.8,542.1 769.2,545.0 C768.5,547.9 774.2,550.1 774.5,552.2 C774.9,554.2 774.5,557.2 771.6,558.7 C768.6,560.3 757.4,560.9 754.8,562.3 C752.2,563.7 756.8,565.9 754.2,568.3 C751.7,570.7 741.4,576.7 738.1,578.4 C734.8,580.1 734.1,578.2 732.2,579.6 C730.2,581.1 727.1,585.9 725.0,588.0 C723.0,590.0 719.5,592.8 718.4,593.3 C717.4,593.9 716.9,592.7 717.9,591.6Z"/>
<path d="M1032.2,529.2 C1033.0,526.6 1035.2,522.7 1036.3,516.0 C1037.4,509.3 1036.5,502.9 1037.5,495.8 C1038.5,488.7 1038.9,484.6 1041.1,480.3 C1043.3,476.0 1045.0,476.3 1048.3,474.3 C1051.6,472.3 1054.0,469.9 1057.8,470.1 C1061.6,470.3 1063.8,473.0 1067.4,475.5 C1071.0,478.0 1073.4,477.7 1075.7,482.7 C1078.0,487.7 1078.0,493.9 1078.7,500.6 C1079.4,507.3 1078.8,510.0 1079.3,516.0 C1079.8,522.0 1080.7,527.5 1081.0,530.4 L1096.0,540.0 L1103.0,539.0 L1108.0,542.3 L1125.8,551.9 L1131.8,555.4 L1160.3,547.0 L1166.3,551.1 L1164.4,564.2 L1133.3,572.6 L1131.8,597.2 L1128.2,611.5 L1123.4,613.9 L1109.0,600.8 L1102.0,597.2 L1099.6,606.7 L1103.1,640.0 L1106.6,680.0 L1110.6,719.8 L1108.6,769.5 L1106.6,807.2 L1114.6,839.0 L1124.1,879.8 L1117.6,883.2 L1104.7,886.8 L1096.7,895.7 L1102.3,914.6 L1084.8,917.0 L1067.9,921.6 L1066.9,930.5 L1069.9,938.4 L1039.0,938.4 L1037.1,924.9 L991.3,919.6 L939.6,919.0 L912.8,908.6 L939.6,855.0 L959.5,795.3 L972.4,743.6 L980.4,680.0 L980.4,680.0 L982.6,671.6 L964.7,672.8 L964.8,640.0 L965.4,622.2 L974.3,615.0 L983.9,587.6 L991.0,578.0 L985.0,565.0 L979.1,540.0 L1007.7,531.6Z"/>
<path d="M1100.7,598.8 C1102.9,599.6 1111.0,606.8 1115.0,611.9 C1118.9,617.1 1122.7,623.5 1124.5,629.8 C1126.3,636.2 1126.3,649.1 1125.7,650.1 C1125.1,651.1 1123.3,641.2 1120.9,635.8 C1118.5,630.4 1114.7,622.7 1111.4,617.9 C1108.1,613.1 1103.2,610.4 1101.4,607.2 C1099.6,604.0 1098.4,598.0 1100.7,598.8Z"/>
<path d="M1162.7,560.7 C1163.0,566.8 1161.2,589.7 1159.6,602.4 C1158.0,615.1 1155.1,629.4 1153.1,637.0 C1151.2,644.5 1148.4,649.1 1147.7,647.7 C1146.9,646.3 1147.3,637.8 1148.4,628.6 C1149.4,619.5 1152.3,603.4 1153.9,592.9 C1155.4,582.3 1156.0,570.8 1157.4,565.4 C1158.9,560.1 1162.3,554.5 1162.7,560.7Z"/>
<path d="M1176.6,469.6 L1177.5,494.6 L1186.5,499.0 L1178.0,502.0 L1178.5,510.0 L1183.8,512.5 L1178.0,515.0 L1177.5,530.0 L1184.7,531.3 L1179.0,534.0 L1177.5,556.0 L1183.8,558.2 L1177.5,561.0 L1180.2,600.0 L1181.0,625.0 L1184.0,630.0 L1181.5,636.0 L1181.8,700.0 L1182.2,680.0 L1182.2,705.8 L1186.2,719.8 L1180.2,727.7 L1181.2,775.4 L1184.2,783.4 L1181.2,799.3 L1184.2,819.2 L1190.1,868.9 L1187.2,904.7 L1190.1,906.6 L1183.2,910.6 L1182.2,954.4 L1187.2,958.3 L1184.2,962.3 L1168.3,958.3 L1170.7,918.6 L1169.3,914.6 L1173.2,908.6 L1174.2,878.8 L1172.2,855.0 L1168.3,839.0 L1173.2,831.1 L1170.3,807.2 L1171.3,787.4 L1170.3,739.6 L1167.3,741.6 L1171.3,719.8 L1170.3,680.0 L1172.2,700.0 L1169.8,674.0 L1165.1,669.2 L1169.8,662.0 L1168.6,638.2 L1165.0,635.8 L1169.8,623.9 L1165.9,600.0 L1167.8,587.7 L1166.0,572.0 L1168.6,548.9 L1164.1,541.2 L1168.6,537.6 L1167.8,525.0 L1165.9,516.1 L1168.6,510.8 L1163.2,507.2 L1169.5,503.6 L1161.4,498.2 L1169.5,495.5 L1170.4,473.2Z"/>
<path d="M1177,596 L1184,599 L1189.5,634 L1181,612Z"/>
<path d="M1165.7,357.8 L1168.7,359.5 L1168.2,367.2 L1164.4,375.8 L1163.9,382.7 L1167.4,387.0 L1170.8,382.7 L1172.5,386.2 L1177.3,387.0 L1176.0,393.1 L1177.3,399.1 L1176.0,405.1 L1176.4,413.7 L1183.3,410.3 L1182.9,417.2 L1188.9,416.3 L1194.9,418.9 L1199.2,425.8 L1201.8,436.1 L1200.5,449.1 L1195.8,437.9 L1190.6,431.8 L1188.9,440.4 L1191.5,441.3 L1188.0,449.1 L1190.6,449.9 L1188.0,454.2 L1194.9,455.1 L1188.9,459.4 L1190.6,462.8 L1183.7,463.7 L1188.9,469.7 L1180.3,470.6 L1179.4,480.0 L1170.0,480.0 L1166.5,476.6 L1161.3,472.3 L1165.7,468.9 L1157.0,467.1 L1157.9,462.0 L1151.9,461.1 L1154.5,455.9 L1147.6,449.1 L1145.8,462.0 L1144.1,474.0 L1138.9,457.7 L1138.5,451.6 L1143.3,445.6 L1139.8,439.6 L1134.6,432.7 L1133.4,424.9 L1135.5,415.5 L1140.7,408.6 L1145.8,401.7 L1145.0,395.7 L1150.1,391.3 L1157.0,382.7 L1157.9,375.0 L1160.5,373.3 L1166.5,363.8 L1163.9,359.5Z"/>
<path d="M957.9,944.3 L971.7,942.7 L974.8,939.5 L986.4,936.4 L987.5,932.2 L990.6,934.8 L1001.2,933.7 L1003.3,938.5 L1008.6,932.2 L1010.7,934.3 L1028.6,934.8 L1029.7,932.7 L1032.9,936.9 L1037.1,936.9 L1067.7,936.4 L1069.8,936.4 L1079.3,940.1 L1087.7,942.7 L1091.9,941.1 L1095.1,944.8 L1100.4,941.7 L1105.7,946.4 L1108.8,942.7 L1113.1,945.9 L1119.4,948.0 L1125.7,941.7 L1128.9,945.9 L1140.5,946.4 L1144.7,945.9 L1151.0,949.0 L1159.5,948.0 L1162.6,949.6 L1169.0,951.7 L1180.6,956.4 L1186.9,958.5 L1183.7,962.2 L1172.1,959.6 L1161.6,958.5 L1140.5,956.4 L1124.7,958.0 L1119.4,954.3 L1108.8,956.4 L1096.2,959.6 L1089.8,958.5 L1077.2,962.2 L1066.6,958.5 L1050.8,956.4 L1045.5,954.3 L1035.0,955.4 L1024.4,956.4 L1007.5,956.4 L1003.3,955.4 L994.9,952.2 L981.2,954.3 L978.0,951.7 L969.5,948.0 L961.1,947.5 L957.9,945.3Z"/>
<path d="M947.4,942.2 L954.8,942.2 L954.8,946.9 L947.4,946.9Z"/>
</g>
<g fill="#52904a">
<path d="M1141.1,415.5 L1147.6,410.3 L1150.6,412.9 L1151.9,418.9 L1149.7,424.9 L1148.4,425.8 L1154.0,440.4 L1145.8,433.5 L1141.5,424.9Z"/>
<path d="M1168.2,432.7 L1173.4,430.1 L1176.8,432.7 L1176.0,441.3 L1166.5,443.5 L1165.7,439.6Z"/>
<path d="M1164.8,416.3 L1170.0,415.5 L1171.7,418.9 L1165.7,420.6Z"/>
<path d="M1159.2,394.8 L1164.4,396.5 L1160.5,398.2Z"/>
<path d="M1151.4,392.2 L1156.2,390.1 L1153.2,394.4Z"/>
<path d="M1179.4,425.8 L1183.7,427.5 L1180.3,428.0Z"/>
</g>
<text x="0" y="0" transform="translate(833.92,357.70) scale(0.9034,1)" font-family="Liberation Sans" font-weight="bold" stroke="#000" stroke-width="0.8" font-size="66.72">N</text>
<text x="0" y="0" transform="translate(1256.15,357.90) scale(0.9480,1)" font-family="Liberation Sans" font-weight="bold" font-size="66.86">CR 12</text>
<text x="0" y="0" transform="translate(786.72,1180.60) scale(0.9215,1)" font-family="Liberation Sans" font-weight="bold" font-size="67.01">L</text>
<text x="0" y="0" transform="translate(913.23,1180.60) scale(0.9459,1)" font-family="Liberation Sans" font-weight="bold" font-size="67.01">- S100 - F200</text>
<text x="0" y="0" transform="translate(924.95,1083.00) scale(0.9288,1)" font-family="Liberation Serif" font-weight="normal" stroke="#000" stroke-width="1.6" font-size="98.02">Edelton</text>
<rect x="1367" y="309" width="33" height="51" fill="#52904a"/><rect x="996" y="1132" width="33" height="51" fill="#52904a"/>
<path d="M1391.3,311.9 L1391.3,357.9 L1382.4,357.9 L1382.4,325.7 C1379,329 1375,331.5 1371.25,332.9 L1371.25,324.4 C1376,322 1382,317 1384.5,311.9 Z"/>
<path d="M1018.7,1134.5 L1018.7,1180.6 L1010,1180.6 L1010,1151.6 C1007,1154 1003,1156 999,1157 L999,1148 C1004,1146 1009,1141 1011.5,1134.5 Z"/>
<g fill="none" stroke="#000" stroke-width="8"><circle cx="846.7" cy="1157.1" r="16.2"/><circle cx="877.8" cy="1157.1" r="16.2"/></g>
</svg>

</body></html>
